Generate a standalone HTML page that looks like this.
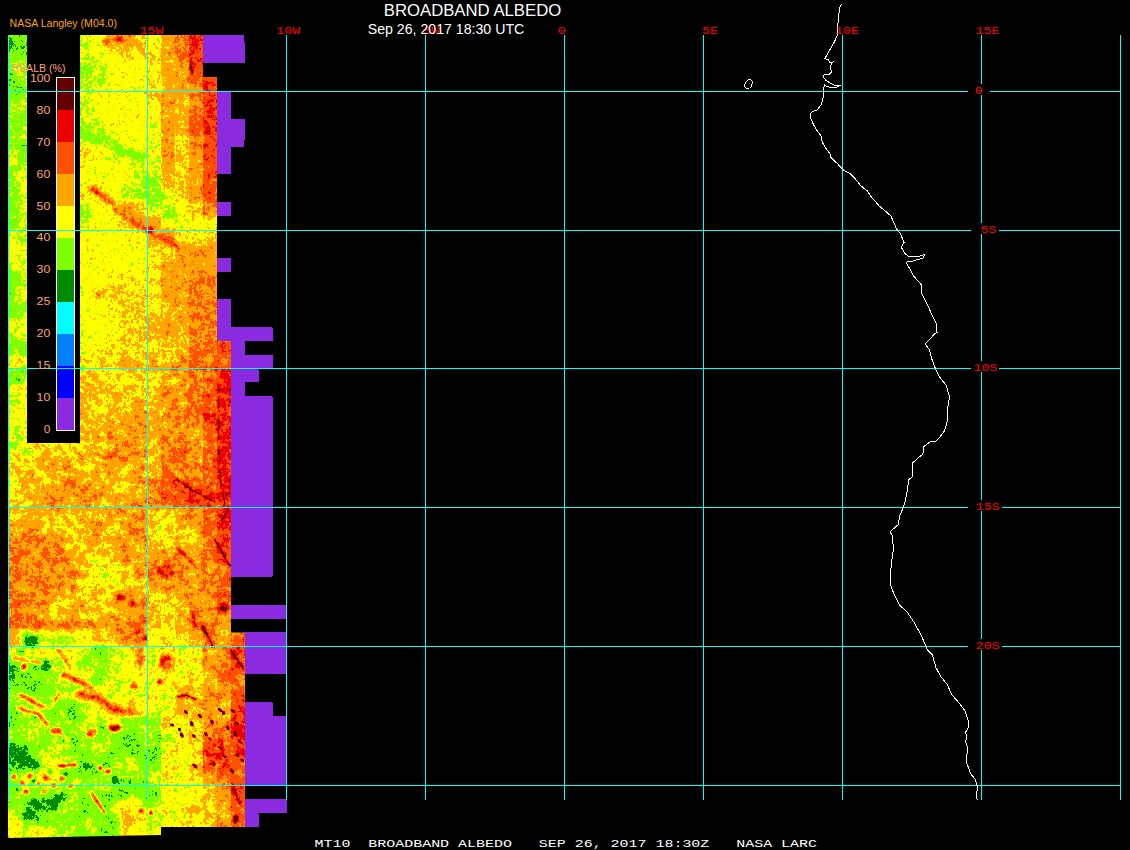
<!DOCTYPE html>
<html lang="en"><head><meta charset="utf-8"><title>BROADBAND ALBEDO</title>
<style>html,body{margin:0;padding:0;background:#000;overflow:hidden}svg{display:block}text{white-space:pre}</style>
</head><body>
<svg width="1130" height="850" viewBox="0 0 1130 850">
<rect width="1130" height="850" fill="#000"/>
<defs>
<filter id="pal" filterUnits="userSpaceOnUse" x="0" y="20" width="300" height="830" color-interpolation-filters="sRGB">
<feColorMatrix in="SourceGraphic" type="matrix" values="1 0 0 0 0 1 0 0 0 0 1 0 0 0 0 0 0 0 0 1" result="lvl"/>
<feColorMatrix in="SourceGraphic" type="matrix" values="0 1 0 0 0 0 1 0 0 0 0 1 0 0 0 0 0 0 0 1" result="a1"/>
<feColorMatrix in="SourceGraphic" type="matrix" values="0 0 1 0 0 0 0 1 0 0 0 0 1 0 0 0 0 0 0 1" result="a2"/>
<feTurbulence type="fractalNoise" baseFrequency="0.14" numOctaves="3" seed="7" result="t1"/>
<feColorMatrix in="t1" type="matrix" values="2.5 0 0 0 -0.75 2.5 0 0 0 -0.75 2.5 0 0 0 -0.75 0 0 0 0 1" result="n1"/>
<feTurbulence type="fractalNoise" baseFrequency="0.05" numOctaves="2" seed="12" result="t2"/>
<feColorMatrix in="t2" type="matrix" values="2.5 0 0 0 -0.75 2.5 0 0 0 -0.75 2.5 0 0 0 -0.75 0 0 0 0 1" result="n2"/>
<feTurbulence type="fractalNoise" baseFrequency="0.38" numOctaves="2" seed="16" result="t3"/>
<feColorMatrix in="t3" type="matrix" values="2.5 0 0 0 -0.75 2.5 0 0 0 -0.75 2.5 0 0 0 -0.75 0 0 0 0 1" result="n3"/>
<feComposite in="a1" in2="n1" operator="arithmetic" k1="1" k2="-0.5" k3="0" k4="0.5" result="q1"/>
<feComposite in="a2" in2="n2" operator="arithmetic" k1="1" k2="-0.5" k3="0" k4="0.5" result="q2"/>
<feComposite in="lvl" in2="q1" operator="arithmetic" k1="0" k2="1" k3="0.16" k4="-0.08" result="s1"/>
<feComposite in="s1" in2="q2" operator="arithmetic" k1="0" k2="1" k3="0.16" k4="-0.08" result="s2"/>
<feComposite in="s2" in2="n3" operator="arithmetic" k1="0" k2="1" k3="0.07" k4="-0.035" result="s3"/>
<feComponentTransfer in="s3">
<feFuncR type="discrete" tableValues="0.541 0.000 0.000 0.000 0.000 0.498 1.000 1.000 1.000 0.933 0.392"/>
<feFuncG type="discrete" tableValues="0.169 0.000 0.502 1.000 0.545 1.000 1.000 0.647 0.314 0.000 0.000"/>
<feFuncB type="discrete" tableValues="0.886 1.000 1.000 1.000 0.000 0.000 0.000 0.000 0.000 0.000 0.000"/>
</feComponentTransfer>
</filter>
<filter id="blA" filterUnits="userSpaceOnUse" x="-40" y="-10" width="380" height="900" color-interpolation-filters="sRGB"><feGaussianBlur stdDeviation="0.7 3"/></filter>
<filter id="blA0" filterUnits="userSpaceOnUse" x="-40" y="-10" width="380" height="900" color-interpolation-filters="sRGB"><feGaussianBlur stdDeviation="2.8 3"/></filter>
<filter id="blC" filterUnits="userSpaceOnUse" x="-40" y="-10" width="380" height="900" color-interpolation-filters="sRGB"><feGaussianBlur stdDeviation="0.6"/></filter>
<filter id="blB" filterUnits="userSpaceOnUse" x="-40" y="-10" width="380" height="900" color-interpolation-filters="sRGB"><feGaussianBlur stdDeviation="1.3"/></filter>
<clipPath id="dclip"><path d="M8 35H203V77H217V341H231V632.5H245V827H161V835L8 838Z"/></clipPath>
</defs>
<g clip-path="url(#dclip)"><g filter="url(#pal)">
<rect x="-40" y="-10" width="380" height="900" fill="#808080"/>
<g filter="url(#blA0)">
<rect x="-40" y="-10" width="380" height="900" fill="#808080"/>
<rect x="-11.6" y="15.50" width="47.8" height="34.17" fill="#7c4c80"/>
<rect x="36.2" y="15.50" width="41.7" height="34.17" fill="#804c80"/>
<rect x="77.9" y="15.50" width="13.9" height="34.17" fill="#8b4c1f"/>
<rect x="91.8" y="15.50" width="13.9" height="34.17" fill="#974c1f"/>
<rect x="105.7" y="15.50" width="13.9" height="34.17" fill="#ae4c1f"/>
<rect x="119.6" y="15.50" width="13.9" height="34.17" fill="#b44c1f"/>
<rect x="133.5" y="15.50" width="13.9" height="34.17" fill="#a24c1f"/>
<rect x="147.4" y="15.50" width="13.9" height="34.17" fill="#986b26"/>
<rect x="161.3" y="15.50" width="13.9" height="34.17" fill="#ae6b26"/>
<rect x="175.2" y="15.50" width="13.9" height="34.17" fill="#b96b26"/>
<rect x="189.1" y="15.50" width="85.6" height="34.17" fill="#d16b26"/>
<rect x="-11.6" y="49.37" width="47.8" height="14.17" fill="#844c80"/>
<rect x="36.2" y="49.37" width="41.7" height="14.17" fill="#804c80"/>
<rect x="77.9" y="49.37" width="13.9" height="14.17" fill="#8b4c1f"/>
<rect x="91.8" y="49.37" width="13.9" height="14.17" fill="#914c1f"/>
<rect x="105.7" y="49.37" width="13.9" height="14.17" fill="#974c1f"/>
<rect x="119.6" y="49.37" width="13.9" height="14.17" fill="#a24c1f"/>
<rect x="133.5" y="49.37" width="13.9" height="14.17" fill="#974c1f"/>
<rect x="147.4" y="49.37" width="13.9" height="14.17" fill="#9e6b26"/>
<rect x="161.3" y="49.37" width="13.9" height="14.17" fill="#ae6b26"/>
<rect x="175.2" y="49.37" width="13.9" height="14.17" fill="#b96b26"/>
<rect x="189.1" y="49.37" width="13.9" height="14.17" fill="#cb6b26"/>
<rect x="203.0" y="49.37" width="71.7" height="14.17" fill="#d16b26"/>
<rect x="-11.6" y="63.24" width="47.8" height="14.17" fill="#844c80"/>
<rect x="36.2" y="63.24" width="41.7" height="14.17" fill="#804c80"/>
<rect x="77.9" y="63.24" width="13.9" height="14.17" fill="#854c1f"/>
<rect x="91.8" y="63.24" width="13.9" height="14.17" fill="#8b4c1f"/>
<rect x="105.7" y="63.24" width="41.7" height="14.17" fill="#974c1f"/>
<rect x="147.4" y="63.24" width="13.9" height="14.17" fill="#9e6b26"/>
<rect x="161.3" y="63.24" width="13.9" height="14.17" fill="#ac6b26"/>
<rect x="175.2" y="63.24" width="13.9" height="14.17" fill="#ae6b26"/>
<rect x="189.1" y="63.24" width="85.6" height="14.17" fill="#c56b26"/>
<rect x="-11.6" y="77.11" width="47.8" height="14.17" fill="#844c80"/>
<rect x="36.2" y="77.11" width="41.7" height="14.17" fill="#804c80"/>
<rect x="77.9" y="77.11" width="27.8" height="14.17" fill="#8b4c1f"/>
<rect x="105.7" y="77.11" width="41.7" height="14.17" fill="#974c1f"/>
<rect x="147.4" y="77.11" width="13.9" height="14.17" fill="#9e6b26"/>
<rect x="161.3" y="77.11" width="13.9" height="14.17" fill="#a66b26"/>
<rect x="175.2" y="77.11" width="13.9" height="14.17" fill="#ae6b26"/>
<rect x="189.1" y="77.11" width="13.9" height="14.17" fill="#b96b26"/>
<rect x="203.0" y="77.11" width="71.7" height="14.17" fill="#cb6b26"/>
<rect x="-11.6" y="90.98" width="47.8" height="14.17" fill="#844c80"/>
<rect x="36.2" y="90.98" width="41.7" height="14.17" fill="#804c80"/>
<rect x="77.9" y="90.98" width="13.9" height="14.17" fill="#914c1f"/>
<rect x="91.8" y="90.98" width="55.6" height="14.17" fill="#974c1f"/>
<rect x="147.4" y="90.98" width="13.9" height="14.17" fill="#9e6b26"/>
<rect x="161.3" y="90.98" width="13.9" height="14.17" fill="#b16b26"/>
<rect x="175.2" y="90.98" width="13.9" height="14.17" fill="#a86b26"/>
<rect x="189.1" y="90.98" width="13.9" height="14.17" fill="#b96b26"/>
<rect x="203.0" y="90.98" width="71.7" height="14.17" fill="#cb6b26"/>
<rect x="-11.6" y="104.85" width="47.8" height="14.17" fill="#844c80"/>
<rect x="36.2" y="104.85" width="41.7" height="14.17" fill="#804c80"/>
<rect x="77.9" y="104.85" width="13.9" height="14.17" fill="#914c1f"/>
<rect x="91.8" y="104.85" width="55.6" height="14.17" fill="#974c1f"/>
<rect x="147.4" y="104.85" width="13.9" height="14.17" fill="#986b26"/>
<rect x="161.3" y="104.85" width="13.9" height="14.17" fill="#b16b26"/>
<rect x="175.2" y="104.85" width="13.9" height="14.17" fill="#a86b26"/>
<rect x="189.1" y="104.85" width="13.9" height="14.17" fill="#b96b26"/>
<rect x="203.0" y="104.85" width="71.7" height="14.17" fill="#cb6b26"/>
<rect x="-11.6" y="118.72" width="47.8" height="14.17" fill="#844c80"/>
<rect x="36.2" y="118.72" width="41.7" height="14.17" fill="#804c80"/>
<rect x="77.9" y="118.72" width="27.8" height="14.17" fill="#8b4c1f"/>
<rect x="105.7" y="118.72" width="41.7" height="14.17" fill="#974c1f"/>
<rect x="147.4" y="118.72" width="13.9" height="14.17" fill="#926b26"/>
<rect x="161.3" y="118.72" width="13.9" height="14.17" fill="#b16b26"/>
<rect x="175.2" y="118.72" width="13.9" height="14.17" fill="#a86b26"/>
<rect x="189.1" y="118.72" width="13.9" height="14.17" fill="#c56b26"/>
<rect x="203.0" y="118.72" width="71.7" height="14.17" fill="#d16b26"/>
<rect x="-11.6" y="132.59" width="47.8" height="14.17" fill="#844c80"/>
<rect x="36.2" y="132.59" width="41.7" height="14.17" fill="#804c80"/>
<rect x="77.9" y="132.59" width="13.9" height="14.17" fill="#8b4c1f"/>
<rect x="91.8" y="132.59" width="13.9" height="14.17" fill="#854c1f"/>
<rect x="105.7" y="132.59" width="13.9" height="14.17" fill="#8b4c1f"/>
<rect x="119.6" y="132.59" width="27.8" height="14.17" fill="#974c1f"/>
<rect x="147.4" y="132.59" width="13.9" height="14.17" fill="#926b26"/>
<rect x="161.3" y="132.59" width="13.9" height="14.17" fill="#b16b26"/>
<rect x="175.2" y="132.59" width="13.9" height="14.17" fill="#a26b26"/>
<rect x="189.1" y="132.59" width="13.9" height="14.17" fill="#b46b26"/>
<rect x="203.0" y="132.59" width="71.7" height="14.17" fill="#cb6b26"/>
<rect x="-11.6" y="146.46" width="47.8" height="14.17" fill="#844c80"/>
<rect x="36.2" y="146.46" width="41.7" height="14.17" fill="#804c80"/>
<rect x="77.9" y="146.46" width="13.9" height="14.17" fill="#a24c1f"/>
<rect x="91.8" y="146.46" width="13.9" height="14.17" fill="#9c4c1f"/>
<rect x="105.7" y="146.46" width="27.8" height="14.17" fill="#8b4c1f"/>
<rect x="133.5" y="146.46" width="13.9" height="14.17" fill="#914c1f"/>
<rect x="147.4" y="146.46" width="13.9" height="14.17" fill="#926b26"/>
<rect x="161.3" y="146.46" width="13.9" height="14.17" fill="#b16b26"/>
<rect x="175.2" y="146.46" width="13.9" height="14.17" fill="#a26b26"/>
<rect x="189.1" y="146.46" width="13.9" height="14.17" fill="#ae6b26"/>
<rect x="203.0" y="146.46" width="71.7" height="14.17" fill="#cb6b26"/>
<rect x="-11.6" y="160.33" width="47.8" height="14.17" fill="#904c80"/>
<rect x="36.2" y="160.33" width="41.7" height="14.17" fill="#8b4c80"/>
<rect x="77.9" y="160.33" width="13.9" height="14.17" fill="#9c4c1f"/>
<rect x="91.8" y="160.33" width="41.7" height="14.17" fill="#974c1f"/>
<rect x="133.5" y="160.33" width="13.9" height="14.17" fill="#8b4c1f"/>
<rect x="147.4" y="160.33" width="13.9" height="14.17" fill="#926b26"/>
<rect x="161.3" y="160.33" width="13.9" height="14.17" fill="#b16b26"/>
<rect x="175.2" y="160.33" width="13.9" height="14.17" fill="#a26b26"/>
<rect x="189.1" y="160.33" width="13.9" height="14.17" fill="#ae6b26"/>
<rect x="203.0" y="160.33" width="71.7" height="14.17" fill="#c56b26"/>
<rect x="-11.6" y="174.20" width="47.8" height="14.17" fill="#904c80"/>
<rect x="36.2" y="174.20" width="41.7" height="14.17" fill="#8b4c80"/>
<rect x="77.9" y="174.20" width="55.6" height="14.17" fill="#974c1f"/>
<rect x="133.5" y="174.20" width="13.9" height="14.17" fill="#8b4c1f"/>
<rect x="147.4" y="174.20" width="13.9" height="14.17" fill="#866b26"/>
<rect x="161.3" y="174.20" width="13.9" height="14.17" fill="#a66b26"/>
<rect x="175.2" y="174.20" width="13.9" height="14.17" fill="#a26b26"/>
<rect x="189.1" y="174.20" width="13.9" height="14.17" fill="#ae6b26"/>
<rect x="203.0" y="174.20" width="71.7" height="14.17" fill="#c56b26"/>
<rect x="-11.6" y="188.07" width="47.8" height="14.17" fill="#8a4c80"/>
<rect x="36.2" y="188.07" width="41.7" height="14.17" fill="#854c80"/>
<rect x="77.9" y="188.07" width="27.8" height="14.17" fill="#a24c1f"/>
<rect x="105.7" y="188.07" width="13.9" height="14.17" fill="#974c1f"/>
<rect x="119.6" y="188.07" width="27.8" height="14.17" fill="#8b4c1f"/>
<rect x="147.4" y="188.07" width="13.9" height="14.17" fill="#816b26"/>
<rect x="161.3" y="188.07" width="13.9" height="14.17" fill="#976b26"/>
<rect x="175.2" y="188.07" width="13.9" height="14.17" fill="#a26b26"/>
<rect x="189.1" y="188.07" width="13.9" height="14.17" fill="#b46b26"/>
<rect x="203.0" y="188.07" width="71.7" height="14.17" fill="#c56b26"/>
<rect x="-11.6" y="201.94" width="47.8" height="14.17" fill="#844c80"/>
<rect x="36.2" y="201.94" width="41.7" height="14.17" fill="#804c80"/>
<rect x="77.9" y="201.94" width="13.9" height="14.17" fill="#8b4c1f"/>
<rect x="91.8" y="201.94" width="13.9" height="14.17" fill="#974c1f"/>
<rect x="105.7" y="201.94" width="13.9" height="14.17" fill="#a24c1f"/>
<rect x="119.6" y="201.94" width="13.9" height="14.17" fill="#b94c1f"/>
<rect x="133.5" y="201.94" width="13.9" height="14.17" fill="#a24c1f"/>
<rect x="147.4" y="201.94" width="27.8" height="14.17" fill="#8b6b26"/>
<rect x="175.2" y="201.94" width="13.9" height="14.17" fill="#976b26"/>
<rect x="189.1" y="201.94" width="13.9" height="14.17" fill="#a26b26"/>
<rect x="203.0" y="201.94" width="71.7" height="14.17" fill="#b96b26"/>
<rect x="-11.6" y="215.81" width="47.8" height="14.17" fill="#8a4c80"/>
<rect x="36.2" y="215.81" width="41.7" height="14.17" fill="#854c80"/>
<rect x="77.9" y="215.81" width="13.9" height="14.17" fill="#8b4c1f"/>
<rect x="91.8" y="215.81" width="27.8" height="14.17" fill="#974c1f"/>
<rect x="119.6" y="215.81" width="13.9" height="14.17" fill="#a24c1f"/>
<rect x="133.5" y="215.81" width="13.9" height="14.17" fill="#b94c1f"/>
<rect x="147.4" y="215.81" width="13.9" height="14.17" fill="#ae6b26"/>
<rect x="161.3" y="215.81" width="13.9" height="14.17" fill="#976b26"/>
<rect x="175.2" y="215.81" width="13.9" height="14.17" fill="#916b26"/>
<rect x="189.1" y="215.81" width="85.6" height="14.17" fill="#976b26"/>
<rect x="-11.6" y="229.68" width="89.5" height="14.17" fill="#8b4c80"/>
<rect x="77.9" y="229.68" width="69.5" height="14.17" fill="#974c1f"/>
<rect x="147.4" y="229.68" width="13.9" height="14.17" fill="#b46b26"/>
<rect x="161.3" y="229.68" width="13.9" height="14.17" fill="#b96b26"/>
<rect x="175.2" y="229.68" width="13.9" height="14.17" fill="#a26b26"/>
<rect x="189.1" y="229.68" width="13.9" height="14.17" fill="#9c6b26"/>
<rect x="203.0" y="229.68" width="71.7" height="14.17" fill="#a26b26"/>
<rect x="-11.6" y="243.55" width="89.5" height="14.17" fill="#914c80"/>
<rect x="77.9" y="243.55" width="69.5" height="14.17" fill="#974c1f"/>
<rect x="147.4" y="243.55" width="13.9" height="14.17" fill="#9c6b26"/>
<rect x="161.3" y="243.55" width="13.9" height="14.17" fill="#a26b26"/>
<rect x="175.2" y="243.55" width="99.5" height="14.17" fill="#ae6b26"/>
<rect x="-11.6" y="257.42" width="89.5" height="14.17" fill="#914c80"/>
<rect x="77.9" y="257.42" width="69.5" height="14.17" fill="#974c1f"/>
<rect x="147.4" y="257.42" width="13.9" height="14.17" fill="#9c6b26"/>
<rect x="161.3" y="257.42" width="27.8" height="14.17" fill="#ae6b26"/>
<rect x="189.1" y="257.42" width="13.9" height="14.17" fill="#b46b26"/>
<rect x="203.0" y="257.42" width="71.7" height="14.17" fill="#ae6b26"/>
<rect x="-11.6" y="271.29" width="89.5" height="14.17" fill="#8b4c80"/>
<rect x="77.9" y="271.29" width="27.8" height="14.17" fill="#974c1f"/>
<rect x="105.7" y="271.29" width="13.9" height="14.17" fill="#9c4c1f"/>
<rect x="119.6" y="271.29" width="13.9" height="14.17" fill="#a24c1f"/>
<rect x="133.5" y="271.29" width="13.9" height="14.17" fill="#9c4c1f"/>
<rect x="147.4" y="271.29" width="13.9" height="14.17" fill="#9c6b26"/>
<rect x="161.3" y="271.29" width="27.8" height="14.17" fill="#ae6b26"/>
<rect x="189.1" y="271.29" width="85.6" height="14.17" fill="#b96b26"/>
<rect x="-11.6" y="285.16" width="89.5" height="14.17" fill="#8b4c80"/>
<rect x="77.9" y="285.16" width="13.9" height="14.17" fill="#974c1f"/>
<rect x="91.8" y="285.16" width="55.6" height="14.17" fill="#a24c1f"/>
<rect x="147.4" y="285.16" width="13.9" height="14.17" fill="#9c6b26"/>
<rect x="161.3" y="285.16" width="27.8" height="14.17" fill="#ae6b26"/>
<rect x="189.1" y="285.16" width="13.9" height="14.17" fill="#b96b26"/>
<rect x="203.0" y="285.16" width="71.7" height="14.17" fill="#b46b26"/>
<rect x="-11.6" y="299.03" width="89.5" height="14.17" fill="#8b4c80"/>
<rect x="77.9" y="299.03" width="27.8" height="14.17" fill="#974c1f"/>
<rect x="105.7" y="299.03" width="41.7" height="14.17" fill="#a24c1f"/>
<rect x="147.4" y="299.03" width="13.9" height="14.17" fill="#9c6b26"/>
<rect x="161.3" y="299.03" width="13.9" height="14.17" fill="#a86b26"/>
<rect x="175.2" y="299.03" width="13.9" height="14.17" fill="#ae6b26"/>
<rect x="189.1" y="299.03" width="85.6" height="14.17" fill="#b96b26"/>
<rect x="-11.6" y="312.90" width="89.5" height="14.17" fill="#8b4c80"/>
<rect x="77.9" y="312.90" width="27.8" height="14.17" fill="#974c1f"/>
<rect x="105.7" y="312.90" width="13.9" height="14.17" fill="#9c4c1f"/>
<rect x="119.6" y="312.90" width="27.8" height="14.17" fill="#a24c1f"/>
<rect x="147.4" y="312.90" width="27.8" height="14.17" fill="#a86b26"/>
<rect x="175.2" y="312.90" width="13.9" height="14.17" fill="#ae6b26"/>
<rect x="189.1" y="312.90" width="85.6" height="14.17" fill="#b96b26"/>
<rect x="-11.6" y="326.77" width="89.5" height="14.17" fill="#8b4c80"/>
<rect x="77.9" y="326.77" width="13.9" height="14.17" fill="#914c1f"/>
<rect x="91.8" y="326.77" width="27.8" height="14.17" fill="#974c1f"/>
<rect x="119.6" y="326.77" width="27.8" height="14.17" fill="#a24c1f"/>
<rect x="147.4" y="326.77" width="13.9" height="14.17" fill="#a86b26"/>
<rect x="161.3" y="326.77" width="13.9" height="14.17" fill="#ae6b26"/>
<rect x="175.2" y="326.77" width="13.9" height="14.17" fill="#a86b26"/>
<rect x="189.1" y="326.77" width="85.6" height="14.17" fill="#b96b26"/>
<rect x="-11.6" y="340.64" width="89.5" height="14.17" fill="#8b4c80"/>
<rect x="77.9" y="340.64" width="13.9" height="14.17" fill="#914c1f"/>
<rect x="91.8" y="340.64" width="13.9" height="14.17" fill="#974c1f"/>
<rect x="105.7" y="340.64" width="41.7" height="14.17" fill="#a24c1f"/>
<rect x="147.4" y="340.64" width="13.9" height="14.17" fill="#9c6b26"/>
<rect x="161.3" y="340.64" width="13.9" height="14.17" fill="#a26b26"/>
<rect x="175.2" y="340.64" width="13.9" height="14.17" fill="#a86b26"/>
<rect x="189.1" y="340.64" width="13.9" height="14.17" fill="#b96b26"/>
<rect x="203.0" y="340.64" width="13.9" height="14.17" fill="#bf6b26"/>
<rect x="216.9" y="340.64" width="57.8" height="14.17" fill="#cb6b26"/>
<rect x="-11.6" y="354.51" width="103.4" height="14.17" fill="#97a659"/>
<rect x="91.8" y="354.51" width="27.8" height="14.17" fill="#a2a659"/>
<rect x="119.6" y="354.51" width="13.9" height="14.17" fill="#a8a659"/>
<rect x="133.5" y="354.51" width="13.9" height="14.17" fill="#a2a659"/>
<rect x="147.4" y="354.51" width="13.9" height="14.17" fill="#a8a659"/>
<rect x="161.3" y="354.51" width="27.8" height="14.17" fill="#aea659"/>
<rect x="189.1" y="354.51" width="13.9" height="14.17" fill="#bfa659"/>
<rect x="203.0" y="354.51" width="71.7" height="14.17" fill="#b9a659"/>
<rect x="-11.6" y="368.38" width="89.5" height="14.17" fill="#8ba659"/>
<rect x="77.9" y="368.38" width="41.7" height="14.17" fill="#a2a659"/>
<rect x="119.6" y="368.38" width="13.9" height="14.17" fill="#9ca659"/>
<rect x="133.5" y="368.38" width="27.8" height="14.17" fill="#a2a659"/>
<rect x="161.3" y="368.38" width="13.9" height="14.17" fill="#a8a659"/>
<rect x="175.2" y="368.38" width="13.9" height="14.17" fill="#aea659"/>
<rect x="189.1" y="368.38" width="13.9" height="14.17" fill="#b4a659"/>
<rect x="203.0" y="368.38" width="13.9" height="14.17" fill="#c5a659"/>
<rect x="216.9" y="368.38" width="57.8" height="14.17" fill="#d1a659"/>
<rect x="-11.6" y="382.25" width="89.5" height="14.17" fill="#91a659"/>
<rect x="77.9" y="382.25" width="41.7" height="14.17" fill="#a2a659"/>
<rect x="119.6" y="382.25" width="13.9" height="14.17" fill="#9ca659"/>
<rect x="133.5" y="382.25" width="27.8" height="14.17" fill="#a2a659"/>
<rect x="161.3" y="382.25" width="27.8" height="14.17" fill="#aea659"/>
<rect x="189.1" y="382.25" width="13.9" height="14.17" fill="#b9a659"/>
<rect x="203.0" y="382.25" width="13.9" height="14.17" fill="#c5a659"/>
<rect x="216.9" y="382.25" width="57.8" height="14.17" fill="#d1a659"/>
<rect x="-11.6" y="396.12" width="89.5" height="14.17" fill="#97a659"/>
<rect x="77.9" y="396.12" width="13.9" height="14.17" fill="#a8a659"/>
<rect x="91.8" y="396.12" width="13.9" height="14.17" fill="#a2a659"/>
<rect x="105.7" y="396.12" width="13.9" height="14.17" fill="#aea659"/>
<rect x="119.6" y="396.12" width="13.9" height="14.17" fill="#a2a659"/>
<rect x="133.5" y="396.12" width="13.9" height="14.17" fill="#aea659"/>
<rect x="147.4" y="396.12" width="13.9" height="14.17" fill="#a8a659"/>
<rect x="161.3" y="396.12" width="13.9" height="14.17" fill="#aea659"/>
<rect x="175.2" y="396.12" width="13.9" height="14.17" fill="#b4a659"/>
<rect x="189.1" y="396.12" width="13.9" height="14.17" fill="#b9a659"/>
<rect x="203.0" y="396.12" width="13.9" height="14.17" fill="#c5a659"/>
<rect x="216.9" y="396.12" width="57.8" height="14.17" fill="#d6a659"/>
<rect x="-11.6" y="409.99" width="89.5" height="14.17" fill="#97a659"/>
<rect x="77.9" y="409.99" width="13.9" height="14.17" fill="#aea659"/>
<rect x="91.8" y="409.99" width="13.9" height="14.17" fill="#a8a659"/>
<rect x="105.7" y="409.99" width="27.8" height="14.17" fill="#aea659"/>
<rect x="133.5" y="409.99" width="13.9" height="14.17" fill="#b4a659"/>
<rect x="147.4" y="409.99" width="13.9" height="14.17" fill="#aea659"/>
<rect x="161.3" y="409.99" width="13.9" height="14.17" fill="#b4a659"/>
<rect x="175.2" y="409.99" width="27.8" height="14.17" fill="#b9a659"/>
<rect x="203.0" y="409.99" width="71.7" height="14.17" fill="#d1a659"/>
<rect x="-11.6" y="423.86" width="89.5" height="14.17" fill="#91a659"/>
<rect x="77.9" y="423.86" width="13.9" height="14.17" fill="#a8a659"/>
<rect x="91.8" y="423.86" width="13.9" height="14.17" fill="#a2a659"/>
<rect x="105.7" y="423.86" width="13.9" height="14.17" fill="#aea659"/>
<rect x="119.6" y="423.86" width="13.9" height="14.17" fill="#a8a659"/>
<rect x="133.5" y="423.86" width="27.8" height="14.17" fill="#aea659"/>
<rect x="161.3" y="423.86" width="13.9" height="14.17" fill="#b4a659"/>
<rect x="175.2" y="423.86" width="13.9" height="14.17" fill="#b9a659"/>
<rect x="189.1" y="423.86" width="13.9" height="14.17" fill="#b4a659"/>
<rect x="203.0" y="423.86" width="13.9" height="14.17" fill="#bfa659"/>
<rect x="216.9" y="423.86" width="57.8" height="14.17" fill="#d1a659"/>
<rect x="-11.6" y="437.73" width="33.9" height="14.17" fill="#91a659"/>
<rect x="22.3" y="437.73" width="27.8" height="14.17" fill="#97a659"/>
<rect x="50.1" y="437.73" width="41.7" height="14.17" fill="#a2a659"/>
<rect x="91.8" y="437.73" width="13.9" height="14.17" fill="#a8a659"/>
<rect x="105.7" y="437.73" width="55.6" height="14.17" fill="#aea659"/>
<rect x="161.3" y="437.73" width="27.8" height="14.17" fill="#b9a659"/>
<rect x="189.1" y="437.73" width="13.9" height="14.17" fill="#a8a659"/>
<rect x="203.0" y="437.73" width="13.9" height="14.17" fill="#b9a659"/>
<rect x="216.9" y="437.73" width="57.8" height="14.17" fill="#d1a659"/>
<rect x="-11.6" y="451.60" width="47.8" height="14.17" fill="#9ca659"/>
<rect x="36.2" y="451.60" width="41.7" height="14.17" fill="#a8a659"/>
<rect x="77.9" y="451.60" width="27.8" height="14.17" fill="#a7a659"/>
<rect x="105.7" y="451.60" width="13.9" height="14.17" fill="#b3a659"/>
<rect x="119.6" y="451.60" width="13.9" height="14.17" fill="#ada659"/>
<rect x="133.5" y="451.60" width="13.9" height="14.17" fill="#b3a659"/>
<rect x="147.4" y="451.60" width="13.9" height="14.17" fill="#a8a659"/>
<rect x="161.3" y="451.60" width="27.8" height="14.17" fill="#b9a659"/>
<rect x="189.1" y="451.60" width="13.9" height="14.17" fill="#aea659"/>
<rect x="203.0" y="451.60" width="13.9" height="14.17" fill="#bfa659"/>
<rect x="216.9" y="451.60" width="57.8" height="14.17" fill="#d1a659"/>
<rect x="-11.6" y="465.47" width="33.9" height="14.17" fill="#a2a659"/>
<rect x="22.3" y="465.47" width="13.9" height="14.17" fill="#a8a659"/>
<rect x="36.2" y="465.47" width="13.9" height="14.17" fill="#a2a659"/>
<rect x="50.1" y="465.47" width="13.9" height="14.17" fill="#a8a659"/>
<rect x="64.0" y="465.47" width="13.9" height="14.17" fill="#aea659"/>
<rect x="77.9" y="465.47" width="27.8" height="14.17" fill="#a7a659"/>
<rect x="105.7" y="465.47" width="13.9" height="14.17" fill="#ada659"/>
<rect x="119.6" y="465.47" width="13.9" height="14.17" fill="#a7a659"/>
<rect x="133.5" y="465.47" width="13.9" height="14.17" fill="#b3a659"/>
<rect x="147.4" y="465.47" width="13.9" height="14.17" fill="#aea659"/>
<rect x="161.3" y="465.47" width="13.9" height="14.17" fill="#bfa659"/>
<rect x="175.2" y="465.47" width="13.9" height="14.17" fill="#b9a659"/>
<rect x="189.1" y="465.47" width="13.9" height="14.17" fill="#b4a659"/>
<rect x="203.0" y="465.47" width="13.9" height="14.17" fill="#c5a659"/>
<rect x="216.9" y="465.47" width="57.8" height="14.17" fill="#d1a659"/>
<rect x="-11.6" y="479.34" width="33.9" height="14.17" fill="#97a659"/>
<rect x="22.3" y="479.34" width="27.8" height="14.17" fill="#a8a659"/>
<rect x="50.1" y="479.34" width="13.9" height="14.17" fill="#aea659"/>
<rect x="64.0" y="479.34" width="13.9" height="14.17" fill="#b4a659"/>
<rect x="77.9" y="479.34" width="13.9" height="14.17" fill="#ada659"/>
<rect x="91.8" y="479.34" width="41.7" height="14.17" fill="#a7a659"/>
<rect x="133.5" y="479.34" width="13.9" height="14.17" fill="#b3a659"/>
<rect x="147.4" y="479.34" width="13.9" height="14.17" fill="#b9a659"/>
<rect x="161.3" y="479.34" width="27.8" height="14.17" fill="#c5a659"/>
<rect x="189.1" y="479.34" width="13.9" height="14.17" fill="#bfa659"/>
<rect x="203.0" y="479.34" width="13.9" height="14.17" fill="#c5a659"/>
<rect x="216.9" y="479.34" width="57.8" height="14.17" fill="#d6a659"/>
<rect x="-11.6" y="493.21" width="33.9" height="14.17" fill="#a2a659"/>
<rect x="22.3" y="493.21" width="13.9" height="14.17" fill="#a8a659"/>
<rect x="36.2" y="493.21" width="13.9" height="14.17" fill="#aea659"/>
<rect x="50.1" y="493.21" width="27.8" height="14.17" fill="#b4a659"/>
<rect x="77.9" y="493.21" width="13.9" height="14.17" fill="#b3a659"/>
<rect x="91.8" y="493.21" width="13.9" height="14.17" fill="#ada659"/>
<rect x="105.7" y="493.21" width="13.9" height="14.17" fill="#a7a659"/>
<rect x="119.6" y="493.21" width="13.9" height="14.17" fill="#ada659"/>
<rect x="133.5" y="493.21" width="13.9" height="14.17" fill="#b3a659"/>
<rect x="147.4" y="493.21" width="13.9" height="14.17" fill="#b9a659"/>
<rect x="161.3" y="493.21" width="27.8" height="14.17" fill="#c5a659"/>
<rect x="189.1" y="493.21" width="85.6" height="14.17" fill="#d1a659"/>
<rect x="-11.6" y="507.08" width="89.5" height="14.17" fill="#a8a659"/>
<rect x="77.9" y="507.08" width="27.8" height="14.17" fill="#ada659"/>
<rect x="105.7" y="507.08" width="13.9" height="14.17" fill="#a7a659"/>
<rect x="119.6" y="507.08" width="27.8" height="14.17" fill="#b3a659"/>
<rect x="147.4" y="507.08" width="13.9" height="14.17" fill="#9ca659"/>
<rect x="161.3" y="507.08" width="13.9" height="14.17" fill="#a2a659"/>
<rect x="175.2" y="507.08" width="13.9" height="14.17" fill="#aea659"/>
<rect x="189.1" y="507.08" width="13.9" height="14.17" fill="#b4a659"/>
<rect x="203.0" y="507.08" width="13.9" height="14.17" fill="#c5a659"/>
<rect x="216.9" y="507.08" width="57.8" height="14.17" fill="#d1a659"/>
<rect x="-11.6" y="520.95" width="33.9" height="14.17" fill="#a8a659"/>
<rect x="22.3" y="520.95" width="13.9" height="14.17" fill="#aea659"/>
<rect x="36.2" y="520.95" width="13.9" height="14.17" fill="#a8a659"/>
<rect x="50.1" y="520.95" width="13.9" height="14.17" fill="#a2a659"/>
<rect x="64.0" y="520.95" width="13.9" height="14.17" fill="#a8a659"/>
<rect x="77.9" y="520.95" width="13.9" height="14.17" fill="#a7a659"/>
<rect x="91.8" y="520.95" width="13.9" height="14.17" fill="#ada659"/>
<rect x="105.7" y="520.95" width="13.9" height="14.17" fill="#a7a659"/>
<rect x="119.6" y="520.95" width="27.8" height="14.17" fill="#b3a659"/>
<rect x="147.4" y="520.95" width="13.9" height="14.17" fill="#9ca659"/>
<rect x="161.3" y="520.95" width="13.9" height="14.17" fill="#a2a659"/>
<rect x="175.2" y="520.95" width="13.9" height="14.17" fill="#a8a659"/>
<rect x="189.1" y="520.95" width="13.9" height="14.17" fill="#aea659"/>
<rect x="203.0" y="520.95" width="13.9" height="14.17" fill="#bfa659"/>
<rect x="216.9" y="520.95" width="57.8" height="14.17" fill="#d1a659"/>
<rect x="-11.6" y="534.82" width="61.7" height="14.17" fill="#b9a659"/>
<rect x="50.1" y="534.82" width="13.9" height="14.17" fill="#b4a659"/>
<rect x="64.0" y="534.82" width="13.9" height="14.17" fill="#a8a659"/>
<rect x="77.9" y="534.82" width="13.9" height="14.17" fill="#a2a659"/>
<rect x="91.8" y="534.82" width="13.9" height="14.17" fill="#aea659"/>
<rect x="105.7" y="534.82" width="13.9" height="14.17" fill="#a8a659"/>
<rect x="119.6" y="534.82" width="27.8" height="14.17" fill="#aea659"/>
<rect x="147.4" y="534.82" width="13.9" height="14.17" fill="#a2a659"/>
<rect x="161.3" y="534.82" width="13.9" height="14.17" fill="#9ca659"/>
<rect x="175.2" y="534.82" width="13.9" height="14.17" fill="#a8a659"/>
<rect x="189.1" y="534.82" width="13.9" height="14.17" fill="#a2a659"/>
<rect x="203.0" y="534.82" width="13.9" height="14.17" fill="#b4a659"/>
<rect x="216.9" y="534.82" width="57.8" height="14.17" fill="#c5a659"/>
<rect x="-11.6" y="548.69" width="75.6" height="14.17" fill="#b9a659"/>
<rect x="64.0" y="548.69" width="13.9" height="14.17" fill="#aea659"/>
<rect x="77.9" y="548.69" width="13.9" height="14.17" fill="#a2a659"/>
<rect x="91.8" y="548.69" width="13.9" height="14.17" fill="#9ca659"/>
<rect x="105.7" y="548.69" width="13.9" height="14.17" fill="#a2a659"/>
<rect x="119.6" y="548.69" width="13.9" height="14.17" fill="#b4a659"/>
<rect x="133.5" y="548.69" width="41.7" height="14.17" fill="#aea659"/>
<rect x="175.2" y="548.69" width="13.9" height="14.17" fill="#b9a659"/>
<rect x="189.1" y="548.69" width="13.9" height="14.17" fill="#b4a659"/>
<rect x="203.0" y="548.69" width="13.9" height="14.17" fill="#b9a659"/>
<rect x="216.9" y="548.69" width="57.8" height="14.17" fill="#c5a659"/>
<rect x="-11.6" y="562.56" width="75.6" height="14.17" fill="#b9a659"/>
<rect x="64.0" y="562.56" width="13.9" height="14.17" fill="#b4a659"/>
<rect x="77.9" y="562.56" width="13.9" height="14.17" fill="#a2a659"/>
<rect x="91.8" y="562.56" width="27.8" height="14.17" fill="#97a659"/>
<rect x="119.6" y="562.56" width="13.9" height="14.17" fill="#a2a659"/>
<rect x="133.5" y="562.56" width="13.9" height="14.17" fill="#aea659"/>
<rect x="147.4" y="562.56" width="13.9" height="14.17" fill="#b9a659"/>
<rect x="161.3" y="562.56" width="13.9" height="14.17" fill="#bfa659"/>
<rect x="175.2" y="562.56" width="13.9" height="14.17" fill="#b9a659"/>
<rect x="189.1" y="562.56" width="13.9" height="14.17" fill="#b4a659"/>
<rect x="203.0" y="562.56" width="13.9" height="14.17" fill="#b9a659"/>
<rect x="216.9" y="562.56" width="57.8" height="14.17" fill="#bfa659"/>
<rect x="-11.6" y="576.43" width="61.7" height="14.17" fill="#b9a659"/>
<rect x="50.1" y="576.43" width="27.8" height="14.17" fill="#b4a659"/>
<rect x="77.9" y="576.43" width="13.9" height="14.17" fill="#a2a659"/>
<rect x="91.8" y="576.43" width="13.9" height="14.17" fill="#9ca659"/>
<rect x="105.7" y="576.43" width="13.9" height="14.17" fill="#97a659"/>
<rect x="119.6" y="576.43" width="13.9" height="14.17" fill="#a2a659"/>
<rect x="133.5" y="576.43" width="13.9" height="14.17" fill="#a8a659"/>
<rect x="147.4" y="576.43" width="13.9" height="14.17" fill="#aea659"/>
<rect x="161.3" y="576.43" width="13.9" height="14.17" fill="#b9a659"/>
<rect x="175.2" y="576.43" width="27.8" height="14.17" fill="#aea659"/>
<rect x="203.0" y="576.43" width="13.9" height="14.17" fill="#b9a659"/>
<rect x="216.9" y="576.43" width="57.8" height="14.17" fill="#bfa659"/>
<rect x="-11.6" y="590.30" width="47.8" height="14.17" fill="#b9a659"/>
<rect x="36.2" y="590.30" width="13.9" height="14.17" fill="#b4a659"/>
<rect x="50.1" y="590.30" width="13.9" height="14.17" fill="#a2a659"/>
<rect x="64.0" y="590.30" width="13.9" height="14.17" fill="#a8a659"/>
<rect x="77.9" y="590.30" width="27.8" height="14.17" fill="#a2a659"/>
<rect x="105.7" y="590.30" width="13.9" height="14.17" fill="#a8a659"/>
<rect x="119.6" y="590.30" width="13.9" height="14.17" fill="#b9a659"/>
<rect x="133.5" y="590.30" width="13.9" height="14.17" fill="#b4a659"/>
<rect x="147.4" y="590.30" width="13.9" height="14.17" fill="#9ca659"/>
<rect x="161.3" y="590.30" width="13.9" height="14.17" fill="#a2a659"/>
<rect x="175.2" y="590.30" width="13.9" height="14.17" fill="#a8a659"/>
<rect x="189.1" y="590.30" width="13.9" height="14.17" fill="#aea659"/>
<rect x="203.0" y="590.30" width="13.9" height="14.17" fill="#b4a659"/>
<rect x="216.9" y="590.30" width="57.8" height="14.17" fill="#c5a659"/>
<rect x="-11.6" y="604.17" width="33.9" height="14.17" fill="#b9a659"/>
<rect x="22.3" y="604.17" width="13.9" height="14.17" fill="#b4a659"/>
<rect x="36.2" y="604.17" width="13.9" height="14.17" fill="#aea659"/>
<rect x="50.1" y="604.17" width="13.9" height="14.17" fill="#a2a659"/>
<rect x="64.0" y="604.17" width="13.9" height="14.17" fill="#a8a659"/>
<rect x="77.9" y="604.17" width="27.8" height="14.17" fill="#a2a659"/>
<rect x="105.7" y="604.17" width="27.8" height="14.17" fill="#aea659"/>
<rect x="133.5" y="604.17" width="13.9" height="14.17" fill="#b4a659"/>
<rect x="147.4" y="604.17" width="13.9" height="14.17" fill="#a2a659"/>
<rect x="161.3" y="604.17" width="13.9" height="14.17" fill="#9ca659"/>
<rect x="175.2" y="604.17" width="13.9" height="14.17" fill="#aea659"/>
<rect x="189.1" y="604.17" width="13.9" height="14.17" fill="#b9a659"/>
<rect x="203.0" y="604.17" width="13.9" height="14.17" fill="#aea659"/>
<rect x="216.9" y="604.17" width="57.8" height="14.17" fill="#bfa659"/>
<rect x="-11.6" y="618.04" width="47.8" height="14.17" fill="#c0a659"/>
<rect x="36.2" y="618.04" width="13.9" height="14.17" fill="#bba659"/>
<rect x="50.1" y="618.04" width="27.8" height="14.17" fill="#b5a659"/>
<rect x="77.9" y="618.04" width="27.8" height="14.17" fill="#afa659"/>
<rect x="105.7" y="618.04" width="27.8" height="14.17" fill="#b5a659"/>
<rect x="133.5" y="618.04" width="13.9" height="14.17" fill="#c0a659"/>
<rect x="147.4" y="618.04" width="13.9" height="14.17" fill="#a8a659"/>
<rect x="161.3" y="618.04" width="13.9" height="14.17" fill="#9ca659"/>
<rect x="175.2" y="618.04" width="13.9" height="14.17" fill="#a8a659"/>
<rect x="189.1" y="618.04" width="13.9" height="14.17" fill="#b4a659"/>
<rect x="203.0" y="618.04" width="13.9" height="14.17" fill="#b9a659"/>
<rect x="216.9" y="618.04" width="57.8" height="14.17" fill="#aea659"/>
<rect x="-11.6" y="631.91" width="33.9" height="14.17" fill="#a84c80"/>
<rect x="22.3" y="631.91" width="13.9" height="14.17" fill="#764c80"/>
<rect x="36.2" y="631.91" width="13.9" height="14.17" fill="#8b4c80"/>
<rect x="50.1" y="631.91" width="13.9" height="14.17" fill="#884c80"/>
<rect x="64.0" y="631.91" width="13.9" height="14.17" fill="#8b4c80"/>
<rect x="77.9" y="631.91" width="13.9" height="14.17" fill="#9c4c80"/>
<rect x="91.8" y="631.91" width="13.9" height="14.17" fill="#a84c80"/>
<rect x="105.7" y="631.91" width="13.9" height="14.17" fill="#ae4c80"/>
<rect x="119.6" y="631.91" width="13.9" height="14.17" fill="#b44c80"/>
<rect x="133.5" y="631.91" width="13.9" height="14.17" fill="#b94c80"/>
<rect x="147.4" y="631.91" width="13.9" height="14.17" fill="#9c4c80"/>
<rect x="161.3" y="631.91" width="13.9" height="14.17" fill="#978066"/>
<rect x="175.2" y="631.91" width="13.9" height="14.17" fill="#9c8066"/>
<rect x="189.1" y="631.91" width="13.9" height="14.17" fill="#a88066"/>
<rect x="203.0" y="631.91" width="13.9" height="14.17" fill="#b48066"/>
<rect x="216.9" y="631.91" width="13.9" height="14.17" fill="#ae8066"/>
<rect x="230.8" y="631.91" width="43.9" height="14.17" fill="#bf8066"/>
<rect x="-11.6" y="645.78" width="47.8" height="14.17" fill="#8b4c80"/>
<rect x="36.2" y="645.78" width="13.9" height="14.17" fill="#914c80"/>
<rect x="50.1" y="645.78" width="13.9" height="14.17" fill="#8b4c80"/>
<rect x="64.0" y="645.78" width="13.9" height="14.17" fill="#914c80"/>
<rect x="77.9" y="645.78" width="13.9" height="14.17" fill="#884c80"/>
<rect x="91.8" y="645.78" width="13.9" height="14.17" fill="#824c80"/>
<rect x="105.7" y="645.78" width="13.9" height="14.17" fill="#914c80"/>
<rect x="119.6" y="645.78" width="13.9" height="14.17" fill="#974c80"/>
<rect x="133.5" y="645.78" width="13.9" height="14.17" fill="#9c4c80"/>
<rect x="147.4" y="645.78" width="13.9" height="14.17" fill="#974c80"/>
<rect x="161.3" y="645.78" width="13.9" height="14.17" fill="#a28066"/>
<rect x="175.2" y="645.78" width="13.9" height="14.17" fill="#978066"/>
<rect x="189.1" y="645.78" width="13.9" height="14.17" fill="#9c8066"/>
<rect x="203.0" y="645.78" width="13.9" height="14.17" fill="#ae8066"/>
<rect x="216.9" y="645.78" width="13.9" height="14.17" fill="#b48066"/>
<rect x="230.8" y="645.78" width="43.9" height="14.17" fill="#c58066"/>
<rect x="-11.6" y="659.65" width="33.9" height="14.17" fill="#7c4c80"/>
<rect x="22.3" y="659.65" width="13.9" height="14.17" fill="#824c80"/>
<rect x="36.2" y="659.65" width="13.9" height="14.17" fill="#7c4c80"/>
<rect x="50.1" y="659.65" width="13.9" height="14.17" fill="#8b4c80"/>
<rect x="64.0" y="659.65" width="13.9" height="14.17" fill="#914c80"/>
<rect x="77.9" y="659.65" width="13.9" height="14.17" fill="#8b4c80"/>
<rect x="91.8" y="659.65" width="13.9" height="14.17" fill="#824c80"/>
<rect x="105.7" y="659.65" width="13.9" height="14.17" fill="#8b4c80"/>
<rect x="119.6" y="659.65" width="13.9" height="14.17" fill="#914c80"/>
<rect x="133.5" y="659.65" width="27.8" height="14.17" fill="#974c80"/>
<rect x="161.3" y="659.65" width="13.9" height="14.17" fill="#a28066"/>
<rect x="175.2" y="659.65" width="13.9" height="14.17" fill="#978066"/>
<rect x="189.1" y="659.65" width="13.9" height="14.17" fill="#9c8066"/>
<rect x="203.0" y="659.65" width="13.9" height="14.17" fill="#ae8066"/>
<rect x="216.9" y="659.65" width="13.9" height="14.17" fill="#b48066"/>
<rect x="230.8" y="659.65" width="43.9" height="14.17" fill="#c58066"/>
<rect x="-11.6" y="673.52" width="33.9" height="14.17" fill="#7c4c80"/>
<rect x="22.3" y="673.52" width="27.8" height="14.17" fill="#824c80"/>
<rect x="50.1" y="673.52" width="13.9" height="14.17" fill="#884c80"/>
<rect x="64.0" y="673.52" width="13.9" height="14.17" fill="#8b4c80"/>
<rect x="77.9" y="673.52" width="13.9" height="14.17" fill="#914c80"/>
<rect x="91.8" y="673.52" width="13.9" height="14.17" fill="#824c80"/>
<rect x="105.7" y="673.52" width="27.8" height="14.17" fill="#914c80"/>
<rect x="133.5" y="673.52" width="27.8" height="14.17" fill="#974c80"/>
<rect x="161.3" y="673.52" width="27.8" height="14.17" fill="#978066"/>
<rect x="189.1" y="673.52" width="13.9" height="14.17" fill="#9c8066"/>
<rect x="203.0" y="673.52" width="13.9" height="14.17" fill="#ae8066"/>
<rect x="216.9" y="673.52" width="57.8" height="14.17" fill="#b98066"/>
<rect x="-11.6" y="687.39" width="33.9" height="14.17" fill="#8b4c80"/>
<rect x="22.3" y="687.39" width="13.9" height="14.17" fill="#824c80"/>
<rect x="36.2" y="687.39" width="13.9" height="14.17" fill="#884c80"/>
<rect x="50.1" y="687.39" width="13.9" height="14.17" fill="#8b4c80"/>
<rect x="64.0" y="687.39" width="13.9" height="14.17" fill="#914c80"/>
<rect x="77.9" y="687.39" width="13.9" height="14.17" fill="#974c80"/>
<rect x="91.8" y="687.39" width="13.9" height="14.17" fill="#914c80"/>
<rect x="105.7" y="687.39" width="13.9" height="14.17" fill="#8b4c80"/>
<rect x="119.6" y="687.39" width="41.7" height="14.17" fill="#974c80"/>
<rect x="161.3" y="687.39" width="13.9" height="14.17" fill="#978066"/>
<rect x="175.2" y="687.39" width="27.8" height="14.17" fill="#a28066"/>
<rect x="203.0" y="687.39" width="13.9" height="14.17" fill="#ae8066"/>
<rect x="216.9" y="687.39" width="13.9" height="14.17" fill="#b58066"/>
<rect x="230.8" y="687.39" width="43.9" height="14.17" fill="#c38066"/>
<rect x="-11.6" y="701.26" width="47.8" height="14.17" fill="#8b4c80"/>
<rect x="36.2" y="701.26" width="13.9" height="14.17" fill="#914c80"/>
<rect x="50.1" y="701.26" width="13.9" height="14.17" fill="#884c80"/>
<rect x="64.0" y="701.26" width="13.9" height="14.17" fill="#824c80"/>
<rect x="77.9" y="701.26" width="13.9" height="14.17" fill="#884c80"/>
<rect x="91.8" y="701.26" width="13.9" height="14.17" fill="#9c4c80"/>
<rect x="105.7" y="701.26" width="13.9" height="14.17" fill="#a84c80"/>
<rect x="119.6" y="701.26" width="13.9" height="14.17" fill="#a24c80"/>
<rect x="133.5" y="701.26" width="27.8" height="14.17" fill="#974c80"/>
<rect x="161.3" y="701.26" width="13.9" height="14.17" fill="#9c8066"/>
<rect x="175.2" y="701.26" width="13.9" height="14.17" fill="#a88066"/>
<rect x="189.1" y="701.26" width="41.7" height="14.17" fill="#ae8066"/>
<rect x="230.8" y="701.26" width="43.9" height="14.17" fill="#d18066"/>
<rect x="-11.6" y="715.13" width="61.7" height="14.17" fill="#824c80"/>
<rect x="50.1" y="715.13" width="13.9" height="14.17" fill="#884c80"/>
<rect x="64.0" y="715.13" width="27.8" height="14.17" fill="#824c80"/>
<rect x="91.8" y="715.13" width="13.9" height="14.17" fill="#884c80"/>
<rect x="105.7" y="715.13" width="13.9" height="14.17" fill="#974c80"/>
<rect x="119.6" y="715.13" width="13.9" height="14.17" fill="#884c80"/>
<rect x="133.5" y="715.13" width="13.9" height="14.17" fill="#824c80"/>
<rect x="147.4" y="715.13" width="13.9" height="14.17" fill="#834c80"/>
<rect x="161.3" y="715.13" width="13.9" height="14.17" fill="#a28066"/>
<rect x="175.2" y="715.13" width="13.9" height="14.17" fill="#9c8066"/>
<rect x="189.1" y="715.13" width="13.9" height="14.17" fill="#a88066"/>
<rect x="203.0" y="715.13" width="27.8" height="14.17" fill="#ae8066"/>
<rect x="230.8" y="715.13" width="43.9" height="14.17" fill="#d18066"/>
<rect x="-11.6" y="729.00" width="103.4" height="14.17" fill="#824c80"/>
<rect x="91.8" y="729.00" width="13.9" height="14.17" fill="#884c80"/>
<rect x="105.7" y="729.00" width="41.7" height="14.17" fill="#824c80"/>
<rect x="147.4" y="729.00" width="13.9" height="14.17" fill="#7d4c80"/>
<rect x="161.3" y="729.00" width="27.8" height="14.17" fill="#978066"/>
<rect x="189.1" y="729.00" width="13.9" height="14.17" fill="#a28066"/>
<rect x="203.0" y="729.00" width="13.9" height="14.17" fill="#b58066"/>
<rect x="216.9" y="729.00" width="13.9" height="14.17" fill="#b48066"/>
<rect x="230.8" y="729.00" width="43.9" height="14.17" fill="#d18066"/>
<rect x="-11.6" y="742.87" width="33.9" height="14.17" fill="#764c80"/>
<rect x="22.3" y="742.87" width="13.9" height="14.17" fill="#7c4c80"/>
<rect x="36.2" y="742.87" width="13.9" height="14.17" fill="#824c80"/>
<rect x="50.1" y="742.87" width="13.9" height="14.17" fill="#884c80"/>
<rect x="64.0" y="742.87" width="83.4" height="14.17" fill="#824c80"/>
<rect x="147.4" y="742.87" width="13.9" height="14.17" fill="#7d4c80"/>
<rect x="161.3" y="742.87" width="27.8" height="14.17" fill="#978066"/>
<rect x="189.1" y="742.87" width="13.9" height="14.17" fill="#9c8066"/>
<rect x="203.0" y="742.87" width="13.9" height="14.17" fill="#c58066"/>
<rect x="216.9" y="742.87" width="13.9" height="14.17" fill="#d18066"/>
<rect x="230.8" y="742.87" width="43.9" height="14.17" fill="#cb8066"/>
<rect x="-11.6" y="756.74" width="33.9" height="14.17" fill="#6b4c80"/>
<rect x="22.3" y="756.74" width="13.9" height="14.17" fill="#764c80"/>
<rect x="36.2" y="756.74" width="13.9" height="14.17" fill="#884c80"/>
<rect x="50.1" y="756.74" width="13.9" height="14.17" fill="#914c80"/>
<rect x="64.0" y="756.74" width="13.9" height="14.17" fill="#884c80"/>
<rect x="77.9" y="756.74" width="69.5" height="14.17" fill="#824c80"/>
<rect x="147.4" y="756.74" width="13.9" height="14.17" fill="#834c80"/>
<rect x="161.3" y="756.74" width="27.8" height="14.17" fill="#978066"/>
<rect x="189.1" y="756.74" width="13.9" height="14.17" fill="#a28066"/>
<rect x="203.0" y="756.74" width="13.9" height="14.17" fill="#bf8066"/>
<rect x="216.9" y="756.74" width="13.9" height="14.17" fill="#d18066"/>
<rect x="230.8" y="756.74" width="43.9" height="14.17" fill="#c58066"/>
<rect x="-11.6" y="770.61" width="33.9" height="14.17" fill="#884c80"/>
<rect x="22.3" y="770.61" width="13.9" height="14.17" fill="#914c80"/>
<rect x="36.2" y="770.61" width="13.9" height="14.17" fill="#974c80"/>
<rect x="50.1" y="770.61" width="13.9" height="14.17" fill="#914c80"/>
<rect x="64.0" y="770.61" width="41.7" height="14.17" fill="#884c80"/>
<rect x="105.7" y="770.61" width="41.7" height="14.17" fill="#824c80"/>
<rect x="147.4" y="770.61" width="13.9" height="14.17" fill="#8c4c80"/>
<rect x="161.3" y="770.61" width="13.9" height="14.17" fill="#9c8066"/>
<rect x="175.2" y="770.61" width="13.9" height="14.17" fill="#978066"/>
<rect x="189.1" y="770.61" width="13.9" height="14.17" fill="#9c8066"/>
<rect x="203.0" y="770.61" width="13.9" height="14.17" fill="#ae8066"/>
<rect x="216.9" y="770.61" width="13.9" height="14.17" fill="#bf8066"/>
<rect x="230.8" y="770.61" width="43.9" height="14.17" fill="#c58066"/>
<rect x="-11.6" y="784.48" width="75.6" height="14.17" fill="#884c80"/>
<rect x="64.0" y="784.48" width="83.4" height="14.17" fill="#824c80"/>
<rect x="147.4" y="784.48" width="13.9" height="14.17" fill="#7d4c80"/>
<rect x="161.3" y="784.48" width="27.8" height="14.17" fill="#978066"/>
<rect x="189.1" y="784.48" width="13.9" height="14.17" fill="#9c8066"/>
<rect x="203.0" y="784.48" width="13.9" height="14.17" fill="#a88066"/>
<rect x="216.9" y="784.48" width="13.9" height="14.17" fill="#ae8066"/>
<rect x="230.8" y="784.48" width="43.9" height="14.17" fill="#c58066"/>
<rect x="-11.6" y="798.35" width="33.9" height="14.17" fill="#884c80"/>
<rect x="22.3" y="798.35" width="27.8" height="14.17" fill="#764c80"/>
<rect x="50.1" y="798.35" width="13.9" height="14.17" fill="#7c4c80"/>
<rect x="64.0" y="798.35" width="55.6" height="14.17" fill="#824c80"/>
<rect x="119.6" y="798.35" width="13.9" height="14.17" fill="#914c80"/>
<rect x="133.5" y="798.35" width="13.9" height="14.17" fill="#974c80"/>
<rect x="147.4" y="798.35" width="13.9" height="14.17" fill="#8c4c80"/>
<rect x="161.3" y="798.35" width="27.8" height="14.17" fill="#978066"/>
<rect x="189.1" y="798.35" width="13.9" height="14.17" fill="#9c8066"/>
<rect x="203.0" y="798.35" width="13.9" height="14.17" fill="#a88066"/>
<rect x="216.9" y="798.35" width="13.9" height="14.17" fill="#ae8066"/>
<rect x="230.8" y="798.35" width="43.9" height="14.17" fill="#c58066"/>
<rect x="-11.6" y="812.22" width="33.9" height="14.17" fill="#914c80"/>
<rect x="22.3" y="812.22" width="13.9" height="14.17" fill="#884c80"/>
<rect x="36.2" y="812.22" width="13.9" height="14.17" fill="#7c4c80"/>
<rect x="50.1" y="812.22" width="55.6" height="14.17" fill="#824c80"/>
<rect x="105.7" y="812.22" width="13.9" height="14.17" fill="#884c80"/>
<rect x="119.6" y="812.22" width="27.8" height="14.17" fill="#a24c80"/>
<rect x="147.4" y="812.22" width="13.9" height="14.17" fill="#8c4c80"/>
<rect x="161.3" y="812.22" width="27.8" height="14.17" fill="#978066"/>
<rect x="189.1" y="812.22" width="13.9" height="14.17" fill="#9c8066"/>
<rect x="203.0" y="812.22" width="13.9" height="14.17" fill="#a88066"/>
<rect x="216.9" y="812.22" width="13.9" height="14.17" fill="#ae8066"/>
<rect x="230.8" y="812.22" width="43.9" height="14.17" fill="#bf8066"/>
<rect x="-11.6" y="826.09" width="61.7" height="14.17" fill="#914c80"/>
<rect x="50.1" y="826.09" width="13.9" height="14.17" fill="#884c80"/>
<rect x="64.0" y="826.09" width="41.7" height="14.17" fill="#824c80"/>
<rect x="105.7" y="826.09" width="13.9" height="14.17" fill="#884c80"/>
<rect x="119.6" y="826.09" width="13.9" height="14.17" fill="#9c4c80"/>
<rect x="133.5" y="826.09" width="13.9" height="14.17" fill="#974c80"/>
<rect x="147.4" y="826.09" width="13.9" height="14.17" fill="#914c80"/>
<rect x="161.3" y="826.09" width="27.8" height="14.17" fill="#978066"/>
<rect x="189.1" y="826.09" width="13.9" height="14.17" fill="#9c8066"/>
<rect x="203.0" y="826.09" width="13.9" height="14.17" fill="#a88066"/>
<rect x="216.9" y="826.09" width="13.9" height="14.17" fill="#ae8066"/>
<rect x="230.8" y="826.09" width="43.9" height="14.17" fill="#bf8066"/>
<rect x="-11.6" y="839.96" width="61.7" height="14.17" fill="#914c80"/>
<rect x="50.1" y="839.96" width="13.9" height="14.17" fill="#8b4c80"/>
<rect x="64.0" y="839.96" width="13.9" height="14.17" fill="#884c80"/>
<rect x="77.9" y="839.96" width="13.9" height="14.17" fill="#824c80"/>
<rect x="91.8" y="839.96" width="13.9" height="14.17" fill="#884c80"/>
<rect x="105.7" y="839.96" width="13.9" height="14.17" fill="#8b4c80"/>
<rect x="119.6" y="839.96" width="13.9" height="14.17" fill="#9c4c80"/>
<rect x="133.5" y="839.96" width="13.9" height="14.17" fill="#974c80"/>
<rect x="147.4" y="839.96" width="13.9" height="14.17" fill="#914c80"/>
<rect x="161.3" y="839.96" width="27.8" height="14.17" fill="#978066"/>
<rect x="189.1" y="839.96" width="13.9" height="14.17" fill="#9c8066"/>
<rect x="203.0" y="839.96" width="13.9" height="14.17" fill="#a88066"/>
<rect x="216.9" y="839.96" width="13.9" height="14.17" fill="#ae8066"/>
<rect x="230.8" y="839.96" width="43.9" height="14.17" fill="#bf8066"/>
</g>
<g filter="url(#blA)">
<rect x="147.4" y="15.50" width="13.9" height="34.17" fill="#986b26"/>
<rect x="161.3" y="15.50" width="13.9" height="34.17" fill="#ae6b26"/>
<rect x="175.2" y="15.50" width="13.9" height="34.17" fill="#b96b26"/>
<rect x="189.1" y="15.50" width="85.6" height="34.17" fill="#d16b26"/>
<rect x="147.4" y="49.37" width="13.9" height="14.17" fill="#9e6b26"/>
<rect x="161.3" y="49.37" width="13.9" height="14.17" fill="#ae6b26"/>
<rect x="175.2" y="49.37" width="13.9" height="14.17" fill="#b96b26"/>
<rect x="189.1" y="49.37" width="13.9" height="14.17" fill="#cb6b26"/>
<rect x="203.0" y="49.37" width="71.7" height="14.17" fill="#d16b26"/>
<rect x="147.4" y="63.24" width="13.9" height="14.17" fill="#9e6b26"/>
<rect x="161.3" y="63.24" width="13.9" height="14.17" fill="#ac6b26"/>
<rect x="175.2" y="63.24" width="13.9" height="14.17" fill="#ae6b26"/>
<rect x="189.1" y="63.24" width="85.6" height="14.17" fill="#c56b26"/>
<rect x="147.4" y="77.11" width="13.9" height="14.17" fill="#9e6b26"/>
<rect x="161.3" y="77.11" width="13.9" height="14.17" fill="#a66b26"/>
<rect x="175.2" y="77.11" width="13.9" height="14.17" fill="#ae6b26"/>
<rect x="189.1" y="77.11" width="13.9" height="14.17" fill="#b96b26"/>
<rect x="203.0" y="77.11" width="71.7" height="14.17" fill="#cb6b26"/>
<rect x="147.4" y="90.98" width="13.9" height="14.17" fill="#9e6b26"/>
<rect x="161.3" y="90.98" width="13.9" height="14.17" fill="#b16b26"/>
<rect x="175.2" y="90.98" width="13.9" height="14.17" fill="#a86b26"/>
<rect x="189.1" y="90.98" width="13.9" height="14.17" fill="#b96b26"/>
<rect x="203.0" y="90.98" width="71.7" height="14.17" fill="#cb6b26"/>
<rect x="147.4" y="104.85" width="13.9" height="14.17" fill="#986b26"/>
<rect x="161.3" y="104.85" width="13.9" height="14.17" fill="#b16b26"/>
<rect x="175.2" y="104.85" width="13.9" height="14.17" fill="#a86b26"/>
<rect x="189.1" y="104.85" width="13.9" height="14.17" fill="#b96b26"/>
<rect x="203.0" y="104.85" width="71.7" height="14.17" fill="#cb6b26"/>
<rect x="147.4" y="118.72" width="13.9" height="14.17" fill="#926b26"/>
<rect x="161.3" y="118.72" width="13.9" height="14.17" fill="#b16b26"/>
<rect x="175.2" y="118.72" width="13.9" height="14.17" fill="#a86b26"/>
<rect x="189.1" y="118.72" width="13.9" height="14.17" fill="#c56b26"/>
<rect x="203.0" y="118.72" width="71.7" height="14.17" fill="#d16b26"/>
<rect x="147.4" y="132.59" width="13.9" height="14.17" fill="#926b26"/>
<rect x="161.3" y="132.59" width="13.9" height="14.17" fill="#b16b26"/>
<rect x="175.2" y="132.59" width="13.9" height="14.17" fill="#a26b26"/>
<rect x="189.1" y="132.59" width="13.9" height="14.17" fill="#b46b26"/>
<rect x="203.0" y="132.59" width="71.7" height="14.17" fill="#cb6b26"/>
<rect x="147.4" y="146.46" width="13.9" height="14.17" fill="#926b26"/>
<rect x="161.3" y="146.46" width="13.9" height="14.17" fill="#b16b26"/>
<rect x="175.2" y="146.46" width="13.9" height="14.17" fill="#a26b26"/>
<rect x="189.1" y="146.46" width="13.9" height="14.17" fill="#ae6b26"/>
<rect x="203.0" y="146.46" width="71.7" height="14.17" fill="#cb6b26"/>
<rect x="147.4" y="160.33" width="13.9" height="14.17" fill="#926b26"/>
<rect x="161.3" y="160.33" width="13.9" height="14.17" fill="#b16b26"/>
<rect x="175.2" y="160.33" width="13.9" height="14.17" fill="#a26b26"/>
<rect x="189.1" y="160.33" width="13.9" height="14.17" fill="#ae6b26"/>
<rect x="203.0" y="160.33" width="71.7" height="14.17" fill="#c56b26"/>
<rect x="147.4" y="174.20" width="13.9" height="14.17" fill="#866b26"/>
<rect x="161.3" y="174.20" width="13.9" height="14.17" fill="#a66b26"/>
<rect x="175.2" y="174.20" width="13.9" height="14.17" fill="#a26b26"/>
<rect x="189.1" y="174.20" width="13.9" height="14.17" fill="#ae6b26"/>
<rect x="203.0" y="174.20" width="71.7" height="14.17" fill="#c56b26"/>
<rect x="147.4" y="188.07" width="13.9" height="14.17" fill="#816b26"/>
<rect x="161.3" y="188.07" width="13.9" height="14.17" fill="#976b26"/>
<rect x="175.2" y="188.07" width="13.9" height="14.17" fill="#a26b26"/>
<rect x="189.1" y="188.07" width="13.9" height="14.17" fill="#b46b26"/>
<rect x="203.0" y="188.07" width="71.7" height="14.17" fill="#c56b26"/>
<rect x="147.4" y="201.94" width="27.8" height="14.17" fill="#8b6b26"/>
<rect x="175.2" y="201.94" width="13.9" height="14.17" fill="#976b26"/>
<rect x="189.1" y="201.94" width="13.9" height="14.17" fill="#a26b26"/>
<rect x="203.0" y="201.94" width="71.7" height="14.17" fill="#b96b26"/>
<rect x="147.4" y="215.81" width="13.9" height="14.17" fill="#ae6b26"/>
<rect x="161.3" y="215.81" width="13.9" height="14.17" fill="#976b26"/>
<rect x="175.2" y="215.81" width="13.9" height="14.17" fill="#916b26"/>
<rect x="189.1" y="215.81" width="85.6" height="14.17" fill="#976b26"/>
<rect x="147.4" y="229.68" width="13.9" height="14.17" fill="#b46b26"/>
<rect x="161.3" y="229.68" width="13.9" height="14.17" fill="#b96b26"/>
<rect x="175.2" y="229.68" width="13.9" height="14.17" fill="#a26b26"/>
<rect x="189.1" y="229.68" width="13.9" height="14.17" fill="#9c6b26"/>
<rect x="203.0" y="229.68" width="71.7" height="14.17" fill="#a26b26"/>
<rect x="147.4" y="243.55" width="13.9" height="14.17" fill="#9c6b26"/>
<rect x="161.3" y="243.55" width="13.9" height="14.17" fill="#a26b26"/>
<rect x="175.2" y="243.55" width="99.5" height="14.17" fill="#ae6b26"/>
<rect x="147.4" y="257.42" width="13.9" height="14.17" fill="#9c6b26"/>
<rect x="161.3" y="257.42" width="27.8" height="14.17" fill="#ae6b26"/>
<rect x="189.1" y="257.42" width="13.9" height="14.17" fill="#b46b26"/>
<rect x="203.0" y="257.42" width="71.7" height="14.17" fill="#ae6b26"/>
<rect x="147.4" y="271.29" width="13.9" height="14.17" fill="#9c6b26"/>
<rect x="161.3" y="271.29" width="27.8" height="14.17" fill="#ae6b26"/>
<rect x="189.1" y="271.29" width="85.6" height="14.17" fill="#b96b26"/>
<rect x="147.4" y="285.16" width="13.9" height="14.17" fill="#9c6b26"/>
<rect x="161.3" y="285.16" width="27.8" height="14.17" fill="#ae6b26"/>
<rect x="189.1" y="285.16" width="13.9" height="14.17" fill="#b96b26"/>
<rect x="203.0" y="285.16" width="71.7" height="14.17" fill="#b46b26"/>
<rect x="147.4" y="299.03" width="13.9" height="14.17" fill="#9c6b26"/>
<rect x="161.3" y="299.03" width="13.9" height="14.17" fill="#a86b26"/>
<rect x="175.2" y="299.03" width="13.9" height="14.17" fill="#ae6b26"/>
<rect x="189.1" y="299.03" width="85.6" height="14.17" fill="#b96b26"/>
<rect x="147.4" y="312.90" width="27.8" height="14.17" fill="#a86b26"/>
<rect x="175.2" y="312.90" width="13.9" height="14.17" fill="#ae6b26"/>
<rect x="189.1" y="312.90" width="85.6" height="14.17" fill="#b96b26"/>
<rect x="147.4" y="326.77" width="13.9" height="14.17" fill="#a86b26"/>
<rect x="161.3" y="326.77" width="13.9" height="14.17" fill="#ae6b26"/>
<rect x="175.2" y="326.77" width="13.9" height="14.17" fill="#a86b26"/>
<rect x="189.1" y="326.77" width="85.6" height="14.17" fill="#b96b26"/>
<rect x="147.4" y="340.64" width="13.9" height="14.17" fill="#9c6b26"/>
<rect x="161.3" y="340.64" width="13.9" height="14.17" fill="#a26b26"/>
<rect x="175.2" y="340.64" width="13.9" height="14.17" fill="#a86b26"/>
<rect x="189.1" y="340.64" width="13.9" height="14.17" fill="#b96b26"/>
<rect x="203.0" y="340.64" width="13.9" height="14.17" fill="#bf6b26"/>
<rect x="216.9" y="340.64" width="57.8" height="14.17" fill="#cb6b26"/>
<rect x="147.4" y="354.51" width="13.9" height="14.17" fill="#a8a659"/>
<rect x="161.3" y="354.51" width="27.8" height="14.17" fill="#aea659"/>
<rect x="189.1" y="354.51" width="13.9" height="14.17" fill="#bfa659"/>
<rect x="203.0" y="354.51" width="71.7" height="14.17" fill="#b9a659"/>
<rect x="147.4" y="368.38" width="13.9" height="14.17" fill="#a2a659"/>
<rect x="161.3" y="368.38" width="13.9" height="14.17" fill="#a8a659"/>
<rect x="175.2" y="368.38" width="13.9" height="14.17" fill="#aea659"/>
<rect x="189.1" y="368.38" width="13.9" height="14.17" fill="#b4a659"/>
<rect x="203.0" y="368.38" width="13.9" height="14.17" fill="#c5a659"/>
<rect x="216.9" y="368.38" width="57.8" height="14.17" fill="#d1a659"/>
<rect x="147.4" y="382.25" width="13.9" height="14.17" fill="#a2a659"/>
<rect x="161.3" y="382.25" width="27.8" height="14.17" fill="#aea659"/>
<rect x="189.1" y="382.25" width="13.9" height="14.17" fill="#b9a659"/>
<rect x="203.0" y="382.25" width="13.9" height="14.17" fill="#c5a659"/>
<rect x="216.9" y="382.25" width="57.8" height="14.17" fill="#d1a659"/>
<rect x="147.4" y="396.12" width="13.9" height="14.17" fill="#a8a659"/>
<rect x="161.3" y="396.12" width="13.9" height="14.17" fill="#aea659"/>
<rect x="175.2" y="396.12" width="13.9" height="14.17" fill="#b4a659"/>
<rect x="189.1" y="396.12" width="13.9" height="14.17" fill="#b9a659"/>
<rect x="203.0" y="396.12" width="13.9" height="14.17" fill="#c5a659"/>
<rect x="216.9" y="396.12" width="57.8" height="14.17" fill="#d6a659"/>
<rect x="147.4" y="409.99" width="13.9" height="14.17" fill="#aea659"/>
<rect x="161.3" y="409.99" width="13.9" height="14.17" fill="#b4a659"/>
<rect x="175.2" y="409.99" width="27.8" height="14.17" fill="#b9a659"/>
<rect x="203.0" y="409.99" width="71.7" height="14.17" fill="#d1a659"/>
<rect x="147.4" y="423.86" width="13.9" height="14.17" fill="#aea659"/>
<rect x="161.3" y="423.86" width="13.9" height="14.17" fill="#b4a659"/>
<rect x="175.2" y="423.86" width="13.9" height="14.17" fill="#b9a659"/>
<rect x="189.1" y="423.86" width="13.9" height="14.17" fill="#b4a659"/>
<rect x="203.0" y="423.86" width="13.9" height="14.17" fill="#bfa659"/>
<rect x="216.9" y="423.86" width="57.8" height="14.17" fill="#d1a659"/>
<rect x="147.4" y="437.73" width="13.9" height="14.17" fill="#aea659"/>
<rect x="161.3" y="437.73" width="27.8" height="14.17" fill="#b9a659"/>
<rect x="189.1" y="437.73" width="13.9" height="14.17" fill="#a8a659"/>
<rect x="203.0" y="437.73" width="13.9" height="14.17" fill="#b9a659"/>
<rect x="216.9" y="437.73" width="57.8" height="14.17" fill="#d1a659"/>
<rect x="147.4" y="451.60" width="13.9" height="14.17" fill="#a8a659"/>
<rect x="161.3" y="451.60" width="27.8" height="14.17" fill="#b9a659"/>
<rect x="189.1" y="451.60" width="13.9" height="14.17" fill="#aea659"/>
<rect x="203.0" y="451.60" width="13.9" height="14.17" fill="#bfa659"/>
<rect x="216.9" y="451.60" width="57.8" height="14.17" fill="#d1a659"/>
<rect x="147.4" y="465.47" width="13.9" height="14.17" fill="#aea659"/>
<rect x="161.3" y="465.47" width="13.9" height="14.17" fill="#bfa659"/>
<rect x="175.2" y="465.47" width="13.9" height="14.17" fill="#b9a659"/>
<rect x="189.1" y="465.47" width="13.9" height="14.17" fill="#b4a659"/>
<rect x="203.0" y="465.47" width="13.9" height="14.17" fill="#c5a659"/>
<rect x="216.9" y="465.47" width="57.8" height="14.17" fill="#d1a659"/>
<rect x="147.4" y="479.34" width="13.9" height="14.17" fill="#b9a659"/>
<rect x="161.3" y="479.34" width="27.8" height="14.17" fill="#c5a659"/>
<rect x="189.1" y="479.34" width="13.9" height="14.17" fill="#bfa659"/>
<rect x="203.0" y="479.34" width="13.9" height="14.17" fill="#c5a659"/>
<rect x="216.9" y="479.34" width="57.8" height="14.17" fill="#d6a659"/>
<rect x="147.4" y="493.21" width="13.9" height="14.17" fill="#b9a659"/>
<rect x="161.3" y="493.21" width="27.8" height="14.17" fill="#c5a659"/>
<rect x="189.1" y="493.21" width="85.6" height="14.17" fill="#d1a659"/>
<rect x="147.4" y="507.08" width="13.9" height="14.17" fill="#9ca659"/>
<rect x="161.3" y="507.08" width="13.9" height="14.17" fill="#a2a659"/>
<rect x="175.2" y="507.08" width="13.9" height="14.17" fill="#aea659"/>
<rect x="189.1" y="507.08" width="13.9" height="14.17" fill="#b4a659"/>
<rect x="203.0" y="507.08" width="13.9" height="14.17" fill="#c5a659"/>
<rect x="216.9" y="507.08" width="57.8" height="14.17" fill="#d1a659"/>
<rect x="147.4" y="520.95" width="13.9" height="14.17" fill="#9ca659"/>
<rect x="161.3" y="520.95" width="13.9" height="14.17" fill="#a2a659"/>
<rect x="175.2" y="520.95" width="13.9" height="14.17" fill="#a8a659"/>
<rect x="189.1" y="520.95" width="13.9" height="14.17" fill="#aea659"/>
<rect x="203.0" y="520.95" width="13.9" height="14.17" fill="#bfa659"/>
<rect x="216.9" y="520.95" width="57.8" height="14.17" fill="#d1a659"/>
<rect x="147.4" y="534.82" width="13.9" height="14.17" fill="#a2a659"/>
<rect x="161.3" y="534.82" width="13.9" height="14.17" fill="#9ca659"/>
<rect x="175.2" y="534.82" width="13.9" height="14.17" fill="#a8a659"/>
<rect x="189.1" y="534.82" width="13.9" height="14.17" fill="#a2a659"/>
<rect x="203.0" y="534.82" width="13.9" height="14.17" fill="#b4a659"/>
<rect x="216.9" y="534.82" width="57.8" height="14.17" fill="#c5a659"/>
<rect x="147.4" y="548.69" width="27.8" height="14.17" fill="#aea659"/>
<rect x="175.2" y="548.69" width="13.9" height="14.17" fill="#b9a659"/>
<rect x="189.1" y="548.69" width="13.9" height="14.17" fill="#b4a659"/>
<rect x="203.0" y="548.69" width="13.9" height="14.17" fill="#b9a659"/>
<rect x="216.9" y="548.69" width="57.8" height="14.17" fill="#c5a659"/>
<rect x="147.4" y="562.56" width="13.9" height="14.17" fill="#b9a659"/>
<rect x="161.3" y="562.56" width="13.9" height="14.17" fill="#bfa659"/>
<rect x="175.2" y="562.56" width="13.9" height="14.17" fill="#b9a659"/>
<rect x="189.1" y="562.56" width="13.9" height="14.17" fill="#b4a659"/>
<rect x="203.0" y="562.56" width="13.9" height="14.17" fill="#b9a659"/>
<rect x="216.9" y="562.56" width="57.8" height="14.17" fill="#bfa659"/>
<rect x="147.4" y="576.43" width="13.9" height="14.17" fill="#aea659"/>
<rect x="161.3" y="576.43" width="13.9" height="14.17" fill="#b9a659"/>
<rect x="175.2" y="576.43" width="27.8" height="14.17" fill="#aea659"/>
<rect x="203.0" y="576.43" width="13.9" height="14.17" fill="#b9a659"/>
<rect x="216.9" y="576.43" width="57.8" height="14.17" fill="#bfa659"/>
<rect x="147.4" y="590.30" width="13.9" height="14.17" fill="#9ca659"/>
<rect x="161.3" y="590.30" width="13.9" height="14.17" fill="#a2a659"/>
<rect x="175.2" y="590.30" width="13.9" height="14.17" fill="#a8a659"/>
<rect x="189.1" y="590.30" width="13.9" height="14.17" fill="#aea659"/>
<rect x="203.0" y="590.30" width="13.9" height="14.17" fill="#b4a659"/>
<rect x="216.9" y="590.30" width="57.8" height="14.17" fill="#c5a659"/>
<rect x="147.4" y="604.17" width="13.9" height="14.17" fill="#a2a659"/>
<rect x="161.3" y="604.17" width="13.9" height="14.17" fill="#9ca659"/>
<rect x="175.2" y="604.17" width="13.9" height="14.17" fill="#aea659"/>
<rect x="189.1" y="604.17" width="13.9" height="14.17" fill="#b9a659"/>
<rect x="203.0" y="604.17" width="13.9" height="14.17" fill="#aea659"/>
<rect x="216.9" y="604.17" width="57.8" height="14.17" fill="#bfa659"/>
<rect x="147.4" y="618.04" width="13.9" height="14.17" fill="#a8a659"/>
<rect x="161.3" y="618.04" width="13.9" height="14.17" fill="#9ca659"/>
<rect x="175.2" y="618.04" width="13.9" height="14.17" fill="#a8a659"/>
<rect x="189.1" y="618.04" width="13.9" height="14.17" fill="#b4a659"/>
<rect x="203.0" y="618.04" width="13.9" height="14.17" fill="#b9a659"/>
<rect x="216.9" y="618.04" width="57.8" height="14.17" fill="#aea659"/>
<rect x="147.4" y="631.91" width="13.9" height="14.17" fill="#9c4c80"/>
<rect x="161.3" y="631.91" width="13.9" height="14.17" fill="#978066"/>
<rect x="175.2" y="631.91" width="13.9" height="14.17" fill="#9c8066"/>
<rect x="189.1" y="631.91" width="13.9" height="14.17" fill="#a88066"/>
<rect x="203.0" y="631.91" width="13.9" height="14.17" fill="#b48066"/>
<rect x="216.9" y="631.91" width="13.9" height="14.17" fill="#ae8066"/>
<rect x="230.8" y="631.91" width="43.9" height="14.17" fill="#bf8066"/>
<rect x="147.4" y="645.78" width="13.9" height="14.17" fill="#974c80"/>
<rect x="161.3" y="645.78" width="13.9" height="14.17" fill="#a28066"/>
<rect x="175.2" y="645.78" width="13.9" height="14.17" fill="#978066"/>
<rect x="189.1" y="645.78" width="13.9" height="14.17" fill="#9c8066"/>
<rect x="203.0" y="645.78" width="13.9" height="14.17" fill="#ae8066"/>
<rect x="216.9" y="645.78" width="13.9" height="14.17" fill="#b48066"/>
<rect x="230.8" y="645.78" width="43.9" height="14.17" fill="#c58066"/>
<rect x="147.4" y="659.65" width="13.9" height="14.17" fill="#974c80"/>
<rect x="161.3" y="659.65" width="13.9" height="14.17" fill="#a28066"/>
<rect x="175.2" y="659.65" width="13.9" height="14.17" fill="#978066"/>
<rect x="189.1" y="659.65" width="13.9" height="14.17" fill="#9c8066"/>
<rect x="203.0" y="659.65" width="13.9" height="14.17" fill="#ae8066"/>
<rect x="216.9" y="659.65" width="13.9" height="14.17" fill="#b48066"/>
<rect x="230.8" y="659.65" width="43.9" height="14.17" fill="#c58066"/>
<rect x="147.4" y="673.52" width="13.9" height="14.17" fill="#974c80"/>
<rect x="161.3" y="673.52" width="27.8" height="14.17" fill="#978066"/>
<rect x="189.1" y="673.52" width="13.9" height="14.17" fill="#9c8066"/>
<rect x="203.0" y="673.52" width="13.9" height="14.17" fill="#ae8066"/>
<rect x="216.9" y="673.52" width="57.8" height="14.17" fill="#b98066"/>
<rect x="147.4" y="687.39" width="13.9" height="14.17" fill="#974c80"/>
<rect x="161.3" y="687.39" width="13.9" height="14.17" fill="#978066"/>
<rect x="175.2" y="687.39" width="27.8" height="14.17" fill="#a28066"/>
<rect x="203.0" y="687.39" width="13.9" height="14.17" fill="#ae8066"/>
<rect x="216.9" y="687.39" width="13.9" height="14.17" fill="#b58066"/>
<rect x="230.8" y="687.39" width="43.9" height="14.17" fill="#c38066"/>
<rect x="147.4" y="701.26" width="13.9" height="14.17" fill="#974c80"/>
<rect x="161.3" y="701.26" width="13.9" height="14.17" fill="#9c8066"/>
<rect x="175.2" y="701.26" width="13.9" height="14.17" fill="#a88066"/>
<rect x="189.1" y="701.26" width="41.7" height="14.17" fill="#ae8066"/>
<rect x="230.8" y="701.26" width="43.9" height="14.17" fill="#d18066"/>
<rect x="147.4" y="715.13" width="13.9" height="14.17" fill="#834c80"/>
<rect x="161.3" y="715.13" width="13.9" height="14.17" fill="#a28066"/>
<rect x="175.2" y="715.13" width="13.9" height="14.17" fill="#9c8066"/>
<rect x="189.1" y="715.13" width="13.9" height="14.17" fill="#a88066"/>
<rect x="203.0" y="715.13" width="27.8" height="14.17" fill="#ae8066"/>
<rect x="230.8" y="715.13" width="43.9" height="14.17" fill="#d18066"/>
<rect x="147.4" y="729.00" width="13.9" height="14.17" fill="#7d4c80"/>
<rect x="161.3" y="729.00" width="27.8" height="14.17" fill="#978066"/>
<rect x="189.1" y="729.00" width="13.9" height="14.17" fill="#a28066"/>
<rect x="203.0" y="729.00" width="13.9" height="14.17" fill="#b58066"/>
<rect x="216.9" y="729.00" width="13.9" height="14.17" fill="#b48066"/>
<rect x="230.8" y="729.00" width="43.9" height="14.17" fill="#d18066"/>
<rect x="147.4" y="742.87" width="13.9" height="14.17" fill="#7d4c80"/>
<rect x="161.3" y="742.87" width="27.8" height="14.17" fill="#978066"/>
<rect x="189.1" y="742.87" width="13.9" height="14.17" fill="#9c8066"/>
<rect x="203.0" y="742.87" width="13.9" height="14.17" fill="#c58066"/>
<rect x="216.9" y="742.87" width="13.9" height="14.17" fill="#d18066"/>
<rect x="230.8" y="742.87" width="43.9" height="14.17" fill="#cb8066"/>
<rect x="147.4" y="756.74" width="13.9" height="14.17" fill="#834c80"/>
<rect x="161.3" y="756.74" width="27.8" height="14.17" fill="#978066"/>
<rect x="189.1" y="756.74" width="13.9" height="14.17" fill="#a28066"/>
<rect x="203.0" y="756.74" width="13.9" height="14.17" fill="#bf8066"/>
<rect x="216.9" y="756.74" width="13.9" height="14.17" fill="#d18066"/>
<rect x="230.8" y="756.74" width="43.9" height="14.17" fill="#c58066"/>
<rect x="147.4" y="770.61" width="13.9" height="14.17" fill="#8c4c80"/>
<rect x="161.3" y="770.61" width="13.9" height="14.17" fill="#9c8066"/>
<rect x="175.2" y="770.61" width="13.9" height="14.17" fill="#978066"/>
<rect x="189.1" y="770.61" width="13.9" height="14.17" fill="#9c8066"/>
<rect x="203.0" y="770.61" width="13.9" height="14.17" fill="#ae8066"/>
<rect x="216.9" y="770.61" width="13.9" height="14.17" fill="#bf8066"/>
<rect x="230.8" y="770.61" width="43.9" height="14.17" fill="#c58066"/>
<rect x="147.4" y="784.48" width="13.9" height="14.17" fill="#7d4c80"/>
<rect x="161.3" y="784.48" width="27.8" height="14.17" fill="#978066"/>
<rect x="189.1" y="784.48" width="13.9" height="14.17" fill="#9c8066"/>
<rect x="203.0" y="784.48" width="13.9" height="14.17" fill="#a88066"/>
<rect x="216.9" y="784.48" width="13.9" height="14.17" fill="#ae8066"/>
<rect x="230.8" y="784.48" width="43.9" height="14.17" fill="#c58066"/>
<rect x="147.4" y="798.35" width="13.9" height="14.17" fill="#8c4c80"/>
<rect x="161.3" y="798.35" width="27.8" height="14.17" fill="#978066"/>
<rect x="189.1" y="798.35" width="13.9" height="14.17" fill="#9c8066"/>
<rect x="203.0" y="798.35" width="13.9" height="14.17" fill="#a88066"/>
<rect x="216.9" y="798.35" width="13.9" height="14.17" fill="#ae8066"/>
<rect x="230.8" y="798.35" width="43.9" height="14.17" fill="#c58066"/>
<rect x="147.4" y="812.22" width="13.9" height="14.17" fill="#8c4c80"/>
<rect x="161.3" y="812.22" width="27.8" height="14.17" fill="#978066"/>
<rect x="189.1" y="812.22" width="13.9" height="14.17" fill="#9c8066"/>
<rect x="203.0" y="812.22" width="13.9" height="14.17" fill="#a88066"/>
<rect x="216.9" y="812.22" width="13.9" height="14.17" fill="#ae8066"/>
<rect x="230.8" y="812.22" width="43.9" height="14.17" fill="#bf8066"/>
<rect x="147.4" y="826.09" width="13.9" height="14.17" fill="#914c80"/>
<rect x="161.3" y="826.09" width="27.8" height="14.17" fill="#978066"/>
<rect x="189.1" y="826.09" width="13.9" height="14.17" fill="#9c8066"/>
<rect x="203.0" y="826.09" width="13.9" height="14.17" fill="#a88066"/>
<rect x="216.9" y="826.09" width="13.9" height="14.17" fill="#ae8066"/>
<rect x="230.8" y="826.09" width="43.9" height="14.17" fill="#bf8066"/>
<rect x="147.4" y="839.96" width="13.9" height="14.17" fill="#914c80"/>
<rect x="161.3" y="839.96" width="27.8" height="14.17" fill="#978066"/>
<rect x="189.1" y="839.96" width="13.9" height="14.17" fill="#9c8066"/>
<rect x="203.0" y="839.96" width="13.9" height="14.17" fill="#a88066"/>
<rect x="216.9" y="839.96" width="13.9" height="14.17" fill="#ae8066"/>
<rect x="230.8" y="839.96" width="43.9" height="14.17" fill="#bf8066"/>
</g>
<g filter="url(#blB)">
<path d="M114.0 209.0 L130.0 219.0" stroke="#aecc4c" stroke-width="6.7" fill="none" stroke-linecap="round" stroke-linejoin="round"/>
<path d="M114.0 209.0 L130.0 219.0" stroke="#cae64c" stroke-width="2.17" fill="none" stroke-linecap="round" stroke-linejoin="round"/>
<path d="M130.0 219.0 L146.0 228.0" stroke="#b0cc4c" stroke-width="6.7" fill="none" stroke-linecap="round" stroke-linejoin="round"/>
<path d="M130.0 219.0 L146.0 228.0" stroke="#d8e64c" stroke-width="2.17" fill="none" stroke-linecap="round" stroke-linejoin="round"/>
<path d="M149.0 231.0 L171.0 245.5" stroke="#b0cc4c" stroke-width="6.7" fill="none" stroke-linecap="round" stroke-linejoin="round"/>
<path d="M149.0 231.0 L171.0 245.5" stroke="#d3e64c" stroke-width="2.17" fill="none" stroke-linecap="round" stroke-linejoin="round"/>
<path d="M160.0 235.0 L180.0 248.5" stroke="#dce64c" stroke-width="1.83" fill="none" stroke-linecap="round" stroke-linejoin="round"/>
<ellipse cx="151" cy="228" rx="2.0" ry="1.8" fill="#ff7340"/>
<path d="M92.5 189.0 L114.0 204.0" stroke="#aecc4c" stroke-width="8" fill="none" stroke-linecap="round" stroke-linejoin="round"/>
<path d="M92.5 189.0 L114.0 204.0" stroke="#c0e64c" stroke-width="2.8499999999999996" fill="none" stroke-linecap="round" stroke-linejoin="round"/>
<ellipse cx="96.4" cy="192" rx="1.2" ry="2.5" fill="#ea7340" transform="rotate(-20 96.4 192)"/>
<ellipse cx="120" cy="39" rx="5" ry="3" fill="#d5e64c"/>
<ellipse cx="106" cy="42" rx="3" ry="3" fill="#d1e64c"/>
<path d="M134.0 39.0 L146.0 57.0" stroke="#b37340" stroke-width="4" fill="none" stroke-linecap="round" stroke-linejoin="round"/>
<path d="M190.5 61.0 L192.0 74.0" stroke="#dfe64c" stroke-width="3.4000000000000004" fill="none" stroke-linecap="round" stroke-linejoin="round"/>
<ellipse cx="207" cy="86" rx="1.5" ry="3" fill="#f1e64c"/>
<ellipse cx="207" cy="128" rx="3" ry="8" fill="#dfe64c"/>
<ellipse cx="84" cy="134" rx="3.5" ry="2.5" fill="#687340"/>
<path d="M84.0 134.0 L105.0 143.0 L125.0 152.0 L142.0 158.0" stroke="#834c33" stroke-width="7" fill="none" stroke-linecap="round" stroke-linejoin="round"/>
<path d="M148.0 194.0 L161.0 196.0" stroke="#824c33" stroke-width="9" fill="none" stroke-linecap="round" stroke-linejoin="round"/>
<path d="M165.0 214.5 L176.0 214.5" stroke="#824c33" stroke-width="4" fill="none" stroke-linecap="round" stroke-linejoin="round"/>
<path d="M81.0 215.0 L87.0 215.0" stroke="#824c33" stroke-width="6" fill="none" stroke-linecap="round" stroke-linejoin="round"/>
<ellipse cx="204" cy="213.3" rx="2" ry="2" fill="#f1e64c"/>
<ellipse cx="98" cy="294" rx="1.5" ry="3" fill="#c3e64c"/>
<ellipse cx="17" cy="377" rx="9" ry="8" fill="#804c4c"/>
<path d="M218.5 400.0 L219.0 412.0" stroke="#dae64c" stroke-width="1.7999999999999998" fill="none" stroke-linecap="round" stroke-linejoin="round"/>
<path d="M219.0 420.0 L218.5 438.0" stroke="#dae64c" stroke-width="1.7999999999999998" fill="none" stroke-linecap="round" stroke-linejoin="round"/>
<path d="M219.0 447.0 L219.5 462.0" stroke="#dae64c" stroke-width="1.7999999999999998" fill="none" stroke-linecap="round" stroke-linejoin="round"/>
<path d="M220.0 470.0 L221.0 486.0" stroke="#dae64c" stroke-width="1.7999999999999998" fill="none" stroke-linecap="round" stroke-linejoin="round"/>
<path d="M223.0 493.0 L225.0 505.0" stroke="#dae64c" stroke-width="2.0" fill="none" stroke-linecap="round" stroke-linejoin="round"/>
<path d="M177.4 480.0 L190.0 489.0" stroke="#d5e64c" stroke-width="3.2" fill="none" stroke-linecap="round" stroke-linejoin="round"/>
<path d="M192.0 490.0 L214.7 502.0" stroke="#dfe64c" stroke-width="3.5999999999999996" fill="none" stroke-linecap="round" stroke-linejoin="round"/>
<path d="M222.0 520.0 L229.0 508.0" stroke="#dfe64c" stroke-width="3.7" fill="none" stroke-linecap="round" stroke-linejoin="round"/>
<path d="M92.0 452.0 L104.0 458.0 L116.0 455.0 L127.0 460.0" stroke="#cc7340" stroke-width="2" fill="none" stroke-linecap="round" stroke-linejoin="round"/>
<ellipse cx="165" cy="572" rx="9" ry="7" fill="#d1e64c"/>
<path d="M177.4 548.0 L197.0 568.0" stroke="#e1e64c" stroke-width="2.425" fill="none" stroke-linecap="round" stroke-linejoin="round"/>
<path d="M214.7 539.4 L230.0 565.7" stroke="#dfe64c" stroke-width="3.7" fill="none" stroke-linecap="round" stroke-linejoin="round"/>
<ellipse cx="224.5" cy="607" rx="4" ry="5" fill="#fae64c"/>
<path d="M191.0 610.0 L196.0 627.0" stroke="#e5e64c" stroke-width="2.425" fill="none" stroke-linecap="round" stroke-linejoin="round"/>
<path d="M202.6 627.0 L212.5 644.7" stroke="#dfe64c" stroke-width="3.7" fill="none" stroke-linecap="round" stroke-linejoin="round"/>
<ellipse cx="121" cy="598" rx="4" ry="3" fill="#dfe64c"/>
<ellipse cx="132" cy="604" rx="3" ry="3" fill="#dfe64c"/>
<ellipse cx="138" cy="632" rx="2.5" ry="2.5" fill="#dfe64c"/>
<ellipse cx="145" cy="638" rx="2.5" ry="2.5" fill="#dfe64c"/>
<path d="M231.0 650.0 L243.0 668.0" stroke="#dfe64c" stroke-width="3.7" fill="none" stroke-linecap="round" stroke-linejoin="round"/>
<ellipse cx="31" cy="642" rx="7.5" ry="6" fill="#684c4c"/>
<ellipse cx="21" cy="652" rx="4" ry="3" fill="#684c4c"/>
<ellipse cx="46" cy="666" rx="5" ry="6" fill="#684c4c"/>
<ellipse cx="12" cy="675" rx="3" ry="8" fill="#684c4c"/>
<ellipse cx="23.7" cy="666.8" rx="3" ry="3" fill="#dae64c"/>
<path d="M14.0 658.0 L40.0 663.0" stroke="#ae7340" stroke-width="4" fill="none" stroke-linecap="round" stroke-linejoin="round"/>
<path d="M58.0 650.0 L70.8 668.0" stroke="#c3e64c" stroke-width="2.425" fill="none" stroke-linecap="round" stroke-linejoin="round"/>
<path d="M63.7 675.7 L79.3 681.3 L90.6 688.4" stroke="#aecc4c" stroke-width="7" fill="none" stroke-linecap="round" stroke-linejoin="round"/>
<path d="M63.7 675.7 L79.3 681.3 L90.6 688.4" stroke="#cae64c" stroke-width="2.8499999999999996" fill="none" stroke-linecap="round" stroke-linejoin="round"/>
<path d="M88.0 667.0 L92.0 671.0" stroke="#b57340" stroke-width="3" fill="none" stroke-linecap="round" stroke-linejoin="round"/>
<ellipse cx="141" cy="657" rx="4" ry="9" fill="#bee64c"/>
<ellipse cx="134.5" cy="685.5" rx="4" ry="4" fill="#bce64c"/>
<ellipse cx="166" cy="661" rx="8" ry="9" fill="#b3cc4c"/>
<ellipse cx="166" cy="661" rx="5" ry="6" fill="#cce64c"/>
<ellipse cx="160" cy="682" rx="2.5" ry="3" fill="#e3e64c"/>
<path d="M177.4 697.0 L186.0 695.0 L195.0 699.0" stroke="#dfe64c" stroke-width="3.2" fill="none" stroke-linecap="round" stroke-linejoin="round"/>
<path d="M79.3 694.0 L99.0 698.3 L113.3 709.6 L127.5 712.5" stroke="#b0cc4c" stroke-width="10.2" fill="none" stroke-linecap="round" stroke-linejoin="round"/>
<path d="M79.3 694.0 L99.0 698.3 L113.3 709.6 L127.5 712.5" stroke="#d8e64c" stroke-width="3.02" fill="none" stroke-linecap="round" stroke-linejoin="round"/>
<path d="M127.5 712.5 L142.0 713.0" stroke="#b37340" stroke-width="5" fill="none" stroke-linecap="round" stroke-linejoin="round"/>
<path d="M21.0 695.5 L42.5 706.8" stroke="#c7e64c" stroke-width="3.6999999999999997" fill="none" stroke-linecap="round" stroke-linejoin="round"/>
<path d="M18.4 708.0 L39.7 715.0 L46.7 723.8" stroke="#cce64c" stroke-width="3.275" fill="none" stroke-linecap="round" stroke-linejoin="round"/>
<path d="M59.0 693.0 L52.0 707.0" stroke="#c5e64c" stroke-width="2.0" fill="none" stroke-linecap="round" stroke-linejoin="round"/>
<path d="M60.0 733.0 L69.4 740.8" stroke="#cae64c" stroke-width="2.0" fill="none" stroke-linecap="round" stroke-linejoin="round"/>
<ellipse cx="115" cy="728" rx="6" ry="3.5" fill="#e3e64c"/>
<ellipse cx="116" cy="727.3" rx="2" ry="1.5" fill="#fa7340"/>
<ellipse cx="56" cy="731" rx="6" ry="3" fill="#dae64c"/>
<ellipse cx="92" cy="733" rx="6" ry="4.5" fill="#aecc4c"/>
<ellipse cx="92" cy="733" rx="4" ry="2.5" fill="#c7e64c"/>
<ellipse cx="19" cy="757" rx="10" ry="8" fill="#684c4c"/>
<ellipse cx="33" cy="765" rx="7" ry="4" fill="#684c4c"/>
<path d="M59.0 766.0 L76.0 765.0" stroke="#efe64c" stroke-width="2.425" fill="none" stroke-linecap="round" stroke-linejoin="round"/>
<ellipse cx="100" cy="768" rx="2.5" ry="2.5" fill="#e3e64c"/>
<ellipse cx="108" cy="771" rx="2.5" ry="2.5" fill="#e3e64c"/>
<ellipse cx="87" cy="766" rx="4" ry="3" fill="#684c4c"/>
<ellipse cx="115" cy="780" rx="3.5" ry="4.5" fill="#684c4c"/>
<ellipse cx="14" cy="777" rx="2.5" ry="2.5" fill="#dfe64c"/>
<ellipse cx="22" cy="783" rx="2.5" ry="2.5" fill="#d1e64c"/>
<ellipse cx="30" cy="776" rx="2.5" ry="2.5" fill="#dfe64c"/>
<ellipse cx="38" cy="784" rx="2.5" ry="2.5" fill="#d1e64c"/>
<ellipse cx="46" cy="778" rx="2.5" ry="2.5" fill="#dfe64c"/>
<ellipse cx="54" cy="785" rx="2.5" ry="2.5" fill="#d1e64c"/>
<ellipse cx="62" cy="779" rx="2.5" ry="2.5" fill="#dfe64c"/>
<ellipse cx="70" cy="786" rx="2.5" ry="2.5" fill="#d1e64c"/>
<ellipse cx="26" cy="792" rx="2.5" ry="2.5" fill="#dfe64c"/>
<ellipse cx="44" cy="791" rx="2.5" ry="2.5" fill="#d1e64c"/>
<ellipse cx="58" cy="794" rx="2.5" ry="2.5" fill="#dfe64c"/>
<ellipse cx="18" cy="790" rx="2.5" ry="2.5" fill="#684c4c"/>
<ellipse cx="34" cy="781" rx="2.5" ry="2.5" fill="#684c4c"/>
<ellipse cx="50" cy="772" rx="2.5" ry="2.5" fill="#684c4c"/>
<ellipse cx="66" cy="774" rx="2.5" ry="2.5" fill="#684c4c"/>
<path d="M91.8 793.0 L98.0 803.0 L105.0 813.0" stroke="#efe64c" stroke-width="2.17" fill="none" stroke-linecap="round" stroke-linejoin="round"/>
<ellipse cx="141" cy="811" rx="2" ry="2" fill="#e8e64c"/>
<ellipse cx="151" cy="813" rx="2" ry="2.5" fill="#e8e64c"/>
<ellipse cx="45" cy="805" rx="17" ry="7" fill="#6f5980"/>
<ellipse cx="62" cy="797" rx="8" ry="5" fill="#6d4c66"/>
<ellipse cx="30" cy="815" rx="8" ry="4" fill="#6f4c66"/>
<ellipse cx="215" cy="750" rx="12" ry="18" fill="#b9cc4c"/>
<ellipse cx="215" cy="750" rx="9" ry="15" fill="#cee64c"/>
<ellipse cx="222" cy="750" rx="2.5" ry="11" fill="#dc7340"/>
<path d="M233.4 789.0 L237.0 797.0 L240.0 804.0" stroke="#dfe64c" stroke-width="3.4000000000000004" fill="none" stroke-linecap="round" stroke-linejoin="round"/>
<ellipse cx="235.5" cy="819" rx="2.5" ry="4" fill="#fde64c"/>
</g>
<g filter="url(#blC)">
<path d="M190.5 61.0 L192.0 74.0" stroke="#ffe64c" stroke-width="1.2" fill="none" stroke-linecap="round" stroke-dasharray="4 1.5 2.5 1"/>
<path d="M218.5 400.0 L219.0 412.0" stroke="#ffe64c" stroke-width="1.2" fill="none" stroke-linecap="round" stroke-dasharray="4 1.5 2.5 1"/>
<path d="M219.0 420.0 L218.5 438.0" stroke="#ffe64c" stroke-width="1.2" fill="none" stroke-linecap="round" stroke-dasharray="4 1.5 2.5 1"/>
<path d="M219.0 447.0 L219.5 462.0" stroke="#ffe64c" stroke-width="1.2" fill="none" stroke-linecap="round" stroke-dasharray="4 1.5 2.5 1"/>
<path d="M220.0 470.0 L221.0 486.0" stroke="#ffe64c" stroke-width="1.2" fill="none" stroke-linecap="round" stroke-dasharray="4 1.5 2.5 1"/>
<path d="M223.0 493.0 L225.0 505.0" stroke="#ffe64c" stroke-width="1.2" fill="none" stroke-linecap="round" stroke-dasharray="4 1.5 2.5 1"/>
<path d="M177.4 480.0 L190.0 489.0" stroke="#ffe64c" stroke-width="1.2" fill="none" stroke-linecap="round" stroke-dasharray="4 1.5 2.5 1"/>
<path d="M192.0 490.0 L214.7 502.0" stroke="#ffe64c" stroke-width="1.3" fill="none" stroke-linecap="round" stroke-dasharray="4 1.5 2.5 1"/>
<path d="M222.0 520.0 L229.0 508.0" stroke="#ffe64c" stroke-width="1.4" fill="none" stroke-linecap="round" stroke-dasharray="4 1.5 2.5 1"/>
<path d="M214.7 539.4 L230.0 565.7" stroke="#ffe64c" stroke-width="1.4" fill="none" stroke-linecap="round" stroke-dasharray="4 1.5 2.5 1"/>
<path d="M202.6 627.0 L212.5 644.7" stroke="#ffe64c" stroke-width="1.4" fill="none" stroke-linecap="round" stroke-dasharray="4 1.5 2.5 1"/>
<path d="M231.0 650.0 L243.0 668.0" stroke="#ffe64c" stroke-width="1.4" fill="none" stroke-linecap="round" stroke-dasharray="4 1.5 2.5 1"/>
<path d="M177.4 697.0 L186.0 695.0 L195.0 699.0" stroke="#ffe64c" stroke-width="1.2" fill="none" stroke-linecap="round" stroke-dasharray="4 1.5 2.5 1"/>
<ellipse cx="172" cy="725" rx="1.27" ry="2.44" fill="#ffe64c" transform="rotate(-73 172 725)"/>
<ellipse cx="179.6" cy="729.5" rx="1.64" ry="1.91" fill="#ffe64c" transform="rotate(-28 179.6 729.5)"/>
<ellipse cx="181.8" cy="735" rx="1.63" ry="2.84" fill="#ffe64c" transform="rotate(-30 181.8 735)"/>
<ellipse cx="191.7" cy="724" rx="1.73" ry="2.69" fill="#ffe64c" transform="rotate(-17 191.7 724)"/>
<ellipse cx="193.9" cy="736" rx="1.44" ry="2.28" fill="#ffe64c" transform="rotate(-52 193.9 736)"/>
<ellipse cx="206" cy="734" rx="1.53" ry="2.40" fill="#ffe64c" transform="rotate(-41 206 734)"/>
<ellipse cx="210" cy="739" rx="1.30" ry="1.83" fill="#ffe64c" transform="rotate(-69 210 739)"/>
<ellipse cx="220" cy="710" rx="1.36" ry="2.73" fill="#ffe64c" transform="rotate(-61 220 710)"/>
<ellipse cx="223.5" cy="713" rx="1.72" ry="2.10" fill="#ffe64c" transform="rotate(-19 223.5 713)"/>
<ellipse cx="233" cy="711" rx="1.46" ry="2.94" fill="#ffe64c" transform="rotate(-50 233 711)"/>
<ellipse cx="236.7" cy="723" rx="1.47" ry="2.54" fill="#ffe64c" transform="rotate(-49 236.7 723)"/>
<ellipse cx="235.6" cy="734" rx="1.72" ry="2.81" fill="#ffe64c" transform="rotate(-19 235.6 734)"/>
<ellipse cx="220" cy="748" rx="1.47" ry="2.20" fill="#ffe64c" transform="rotate(-48 220 748)"/>
<ellipse cx="224.6" cy="756" rx="1.36" ry="2.47" fill="#ffe64c" transform="rotate(-62 224.6 756)"/>
<ellipse cx="237.8" cy="755" rx="1.44" ry="1.88" fill="#ffe64c" transform="rotate(-52 237.8 755)"/>
<ellipse cx="242" cy="760" rx="1.47" ry="2.07" fill="#ffe64c" transform="rotate(-48 242 760)"/>
<ellipse cx="195" cy="766" rx="1.52" ry="3.06" fill="#ffe64c" transform="rotate(-43 195 766)"/>
<ellipse cx="232" cy="771" rx="1.49" ry="2.96" fill="#ffe64c" transform="rotate(-47 232 771)"/>
<ellipse cx="212" cy="722" rx="1.65" ry="2.17" fill="#ffe64c" transform="rotate(-27 212 722)"/>
<ellipse cx="228" cy="728" rx="1.73" ry="2.55" fill="#ffe64c" transform="rotate(-17 228 728)"/>
<ellipse cx="240" cy="742" rx="1.35" ry="2.33" fill="#ffe64c" transform="rotate(-63 240 742)"/>
<ellipse cx="214" cy="764" rx="1.64" ry="1.78" fill="#ffe64c" transform="rotate(-29 214 764)"/>
<ellipse cx="186" cy="712" rx="1.51" ry="2.31" fill="#ffe64c" transform="rotate(-44 186 712)"/>
<ellipse cx="200" cy="716" rx="1.49" ry="2.60" fill="#ffe64c" transform="rotate(-46 200 716)"/>
<path d="M233.4 789.0 L237.0 797.0 L240.0 804.0" stroke="#ffe64c" stroke-width="1.2" fill="none" stroke-linecap="round" stroke-dasharray="4 1.5 2.5 1"/>
</g>
</g></g>
<rect x="203" y="35" width="41" height="28" fill="#8A2BE2" shape-rendering="crispEdges"/>
<rect x="244" y="42" width="1" height="21" fill="#8A2BE2" shape-rendering="crispEdges"/>
<rect x="217" y="91" width="14" height="83" fill="#8A2BE2" shape-rendering="crispEdges"/>
<rect x="231" y="119" width="13" height="28" fill="#8A2BE2" shape-rendering="crispEdges"/>
<rect x="244" y="119" width="1" height="21" fill="#8A2BE2" shape-rendering="crispEdges"/>
<rect x="217" y="202" width="14" height="14" fill="#8A2BE2" shape-rendering="crispEdges"/>
<rect x="217" y="258" width="14" height="14" fill="#8A2BE2" shape-rendering="crispEdges"/>
<rect x="217" y="299" width="14" height="42" fill="#8A2BE2" shape-rendering="crispEdges"/>
<rect x="231" y="327" width="41" height="14" fill="#8A2BE2" shape-rendering="crispEdges"/>
<rect x="272" y="328" width="1" height="13" fill="#8A2BE2" shape-rendering="crispEdges"/>
<rect x="231" y="341" width="14" height="55" fill="#8A2BE2" shape-rendering="crispEdges"/>
<rect x="245" y="355" width="27" height="14" fill="#8A2BE2" shape-rendering="crispEdges"/>
<rect x="272" y="355" width="1" height="14" fill="#8A2BE2" shape-rendering="crispEdges"/>
<rect x="245" y="369" width="13" height="13" fill="#8A2BE2" shape-rendering="crispEdges"/>
<rect x="258" y="370" width="1" height="12" fill="#8A2BE2" shape-rendering="crispEdges"/>
<rect x="231" y="396" width="41" height="181" fill="#8A2BE2" shape-rendering="crispEdges"/>
<rect x="272" y="397" width="1" height="179" fill="#8A2BE2" shape-rendering="crispEdges"/>
<rect x="231" y="605" width="55" height="14" fill="#8A2BE2" shape-rendering="crispEdges"/>
<rect x="245" y="632" width="41" height="42" fill="#8A2BE2" shape-rendering="crispEdges"/>
<rect x="245" y="702" width="27" height="14" fill="#8A2BE2" shape-rendering="crispEdges"/>
<rect x="272" y="703" width="1" height="13" fill="#8A2BE2" shape-rendering="crispEdges"/>
<rect x="245" y="716" width="41" height="69" fill="#8A2BE2" shape-rendering="crispEdges"/>
<rect x="245" y="799" width="42" height="14" fill="#8A2BE2" shape-rendering="crispEdges"/>
<rect x="245" y="813" width="13" height="14" fill="#8A2BE2" shape-rendering="crispEdges"/>
<rect x="258" y="814" width="1" height="13" fill="#8A2BE2" shape-rendering="crispEdges"/>
<rect x="27" y="35" width="53" height="408" fill="#000"/>
<rect x="57" y="78" width="17" height="32" fill="#640000" shape-rendering="crispEdges"/>
<rect x="57" y="110" width="17" height="32" fill="#EE0000" shape-rendering="crispEdges"/>
<rect x="57" y="142" width="17" height="32" fill="#FF5000" shape-rendering="crispEdges"/>
<rect x="57" y="174" width="17" height="32" fill="#FFA500" shape-rendering="crispEdges"/>
<rect x="57" y="206" width="17" height="32" fill="#FFFF00" shape-rendering="crispEdges"/>
<rect x="57" y="238" width="17" height="32" fill="#7FFF00" shape-rendering="crispEdges"/>
<rect x="57" y="270" width="17" height="32" fill="#008B00" shape-rendering="crispEdges"/>
<rect x="57" y="302" width="17" height="32" fill="#00FFFF" shape-rendering="crispEdges"/>
<rect x="57" y="334" width="17" height="32" fill="#0080FF" shape-rendering="crispEdges"/>
<rect x="57" y="366" width="17" height="32" fill="#0000FF" shape-rendering="crispEdges"/>
<rect x="57" y="398" width="17" height="33" fill="#8A2BE2" shape-rendering="crispEdges"/>
<rect x="56.5" y="77.5" width="18" height="353" fill="none" stroke="#fff" stroke-width="1" shape-rendering="crispEdges"/>
<path d="M8.5 35V800M1120.5 35V800M147.5 35V800M286.5 35V800M425.5 35V800M564.5 35V800M703.5 35V800M842.5 35V800M981.5 35V84M981.5 95V223M981.5 234V361M981.5 372V500M981.5 511V639M981.5 650V800M8 91.5H968M990 91.5H1121M8 230.5H971M999 230.5H1121M8 368.5H971M999 368.5H1121M8 507.5H968M1002 507.5H1121M8 646.5H968M1002 646.5H1121M8 785.5H1121" stroke="#00FFFF" stroke-width="1" fill="none" shape-rendering="crispEdges"/>
<path d="M841.3 4.0 L839.8 7.5 L838.8 15.0 L837.8 25.0 L837.3 35.0 L834.8 41.0 L829.8 50.0 L824.8 58.6 L828.6 60.0 L829.8 62.4 L832.8 62.0 L830.6 65.4 L831.3 72.4 L828.6 75.0 L824.3 74.0 L823.3 76.9 L826.0 80.4 L829.8 82.9 L836.0 86.0 L840.6 85.4 L834.8 87.8 L827.3 86.8 L824.8 84.9 L823.3 88.6 L823.6 91.6 L822.8 99.8 L821.0 104.8 L817.4 109.8 L812.4 111.6 L810.4 113.6 L810.9 118.5 L813.6 124.8 L817.4 131.0 L821.0 136.0 L822.3 142.3 L826.0 148.5 L830.6 154.7 L831.0 157.7 L837.3 163.5 L842.8 169.7 L849.8 173.4 L854.8 178.4 L861.0 185.9 L867.3 190.9 L872.3 198.4 L874.1 200.0 L878.8 205.6 L884.4 210.3 L891.0 216.0 L892.9 220.6 L896.6 229.0 L900.4 233.8 L904.1 242.2 L901.3 247.3 L905.0 253.5 L908.8 256.8 L918.2 256.8 L924.8 254.4 L922.9 258.2 L912.6 261.0 L907.9 261.0 L906.2 262.8 L910.7 270.4 L913.5 276.0 L921.0 284.4 L922.0 293.8 L927.6 305.0 L931.3 313.5 L936.0 322.9 L937.0 332.3 L933.6 334.7 L929.5 339.8 L925.3 344.0 L929.5 350.0 L931.3 357.5 L935.1 367.8 L939.8 377.2 L946.3 385.6 L949.5 396.9 L947.7 408.2 L947.3 421.3 L944.5 430.7 L939.8 437.2 L936.0 441.0 L930.4 441.6 L923.8 446.6 L922.9 454.0 L918.2 457.9 L912.6 463.0 L912.6 476.6 L908.8 479.5 L907.0 492.6 L905.0 502.0 L903.2 507.5 L899.4 516.9 L898.5 524.4 L893.8 528.5 L890.0 531.9 L892.3 535.6 L893.4 548.8 L891.6 561.9 L890.4 575.0 L891.0 586.3 L894.7 595.7 L899.4 605.0 L906.9 611.6 L914.4 622.9 L921.0 635.0 L926.0 646.3 L927.6 650.0 L932.3 654.7 L936.0 667.8 L940.7 676.3 L947.3 684.7 L952.0 695.0 L959.5 703.5 L965.0 711.0 L968.5 721.3 L968.5 727.0 L965.5 732.5 L967.0 737.2 L965.5 742.0 L967.4 746.6 L966.6 762.6 L970.7 773.8 L975.4 779.5 L977.3 787.0 L976.4 798.2 L977.7 799.7" stroke="#fff" stroke-width="1" fill="none" shape-rendering="crispEdges"/>
<ellipse cx="748.5" cy="84" rx="3.2" ry="4.8" transform="rotate(28 748.5 84)" stroke="#fff" stroke-width="1" fill="none" shape-rendering="crispEdges"/>
<text x="472.5" y="16" font-family="Liberation Sans, sans-serif" font-size="16" fill="#fff" text-anchor="middle" textLength="177.5" lengthAdjust="spacingAndGlyphs">BROADBAND ALBEDO</text>
<text x="423.20" y="34" font-family="Liberation Mono, monospace" font-size="11.6" fill="#FF0000" textLength="16.0" lengthAdjust="spacingAndGlyphs" >5W</text>
<text x="446" y="34" font-family="Liberation Sans, sans-serif" font-size="14" fill="#fff" text-anchor="middle" textLength="156.5" lengthAdjust="spacingAndGlyphs">Sep 26, 2017 18:30 UTC</text>
<text x="9.5" y="27" font-family="Liberation Sans, sans-serif" font-size="10.5" fill="#FFA500" textLength="107.5" lengthAdjust="spacingAndGlyphs">NASA Langley (M04.0)</text>
<text x="139.50" y="34" font-family="Liberation Mono, monospace" font-size="11.6" fill="#FF0000" textLength="24.0" lengthAdjust="spacingAndGlyphs" >15W</text>
<text x="276.20" y="34" font-family="Liberation Mono, monospace" font-size="11.6" fill="#FF0000" textLength="24.0" lengthAdjust="spacingAndGlyphs" >10W</text>
<text x="557.70" y="34" font-family="Liberation Mono, monospace" font-size="11.6" fill="#FF0000" textLength="8.0" lengthAdjust="spacingAndGlyphs" >0</text>
<text x="702.00" y="34" font-family="Liberation Mono, monospace" font-size="11.6" fill="#FF0000" textLength="16.0" lengthAdjust="spacingAndGlyphs" >5E</text>
<text x="835.00" y="34" font-family="Liberation Mono, monospace" font-size="11.6" fill="#FF0000" textLength="24.0" lengthAdjust="spacingAndGlyphs" >10E</text>
<text x="975.50" y="34" font-family="Liberation Mono, monospace" font-size="11.6" fill="#FF0000" textLength="24.0" lengthAdjust="spacingAndGlyphs" >15E</text>
<text x="974.80" y="94" font-family="Liberation Mono, monospace" font-size="11.6" fill="#FF0000" textLength="8.0" lengthAdjust="spacingAndGlyphs" >0</text>
<text x="980.60" y="233" font-family="Liberation Mono, monospace" font-size="11.6" fill="#FF0000" textLength="16.0" lengthAdjust="spacingAndGlyphs" >5S</text>
<text x="973.50" y="371" font-family="Liberation Mono, monospace" font-size="11.6" fill="#FF0000" textLength="24.0" lengthAdjust="spacingAndGlyphs" >10S</text>
<text x="975.70" y="510" font-family="Liberation Mono, monospace" font-size="11.6" fill="#FF0000" textLength="24.0" lengthAdjust="spacingAndGlyphs" >15S</text>
<text x="975.70" y="649" font-family="Liberation Mono, monospace" font-size="11.6" fill="#FF0000" textLength="24.0" lengthAdjust="spacingAndGlyphs" >20S</text>
<text x="12" y="71.7" font-family="Liberation Sans, sans-serif" font-size="10.8" fill="#FFA07A" textLength="53.5" lengthAdjust="spacingAndGlyphs">BBALB (%)</text>
<text x="30.0" y="81.9" font-family="Liberation Sans, sans-serif" font-size="11" fill="#FFA07A" textLength="20.3" lengthAdjust="spacingAndGlyphs">100</text>
<text x="36.6" y="113.8" font-family="Liberation Sans, sans-serif" font-size="11" fill="#FFA07A" textLength="13.7" lengthAdjust="spacingAndGlyphs">80</text>
<text x="36.6" y="145.7" font-family="Liberation Sans, sans-serif" font-size="11" fill="#FFA07A" textLength="13.7" lengthAdjust="spacingAndGlyphs">70</text>
<text x="36.6" y="177.6" font-family="Liberation Sans, sans-serif" font-size="11" fill="#FFA07A" textLength="13.7" lengthAdjust="spacingAndGlyphs">60</text>
<text x="36.6" y="209.5" font-family="Liberation Sans, sans-serif" font-size="11" fill="#FFA07A" textLength="13.7" lengthAdjust="spacingAndGlyphs">50</text>
<text x="36.6" y="241.4" font-family="Liberation Sans, sans-serif" font-size="11" fill="#FFA07A" textLength="13.7" lengthAdjust="spacingAndGlyphs">40</text>
<text x="36.6" y="273.3" font-family="Liberation Sans, sans-serif" font-size="11" fill="#FFA07A" textLength="13.7" lengthAdjust="spacingAndGlyphs">30</text>
<text x="36.6" y="305.2" font-family="Liberation Sans, sans-serif" font-size="11" fill="#FFA07A" textLength="13.7" lengthAdjust="spacingAndGlyphs">25</text>
<text x="36.6" y="337.1" font-family="Liberation Sans, sans-serif" font-size="11" fill="#FFA07A" textLength="13.7" lengthAdjust="spacingAndGlyphs">20</text>
<text x="36.6" y="369.0" font-family="Liberation Sans, sans-serif" font-size="11" fill="#FFA07A" textLength="13.7" lengthAdjust="spacingAndGlyphs">15</text>
<text x="36.6" y="400.9" font-family="Liberation Sans, sans-serif" font-size="11" fill="#FFA07A" textLength="13.7" lengthAdjust="spacingAndGlyphs">10</text>
<text x="43.7" y="432.8" font-family="Liberation Sans, sans-serif" font-size="11" fill="#FFA07A" textLength="6.6" lengthAdjust="spacingAndGlyphs">0</text>
<text x="314.5" y="847" font-family="Liberation Mono, monospace" font-size="11.6" fill="#fff" xml:space="preserve" textLength="502.5" lengthAdjust="spacingAndGlyphs">MT10  BROADBAND ALBEDO   SEP 26, 2017 18:30Z   NASA LARC</text>
</svg>
</body></html>
